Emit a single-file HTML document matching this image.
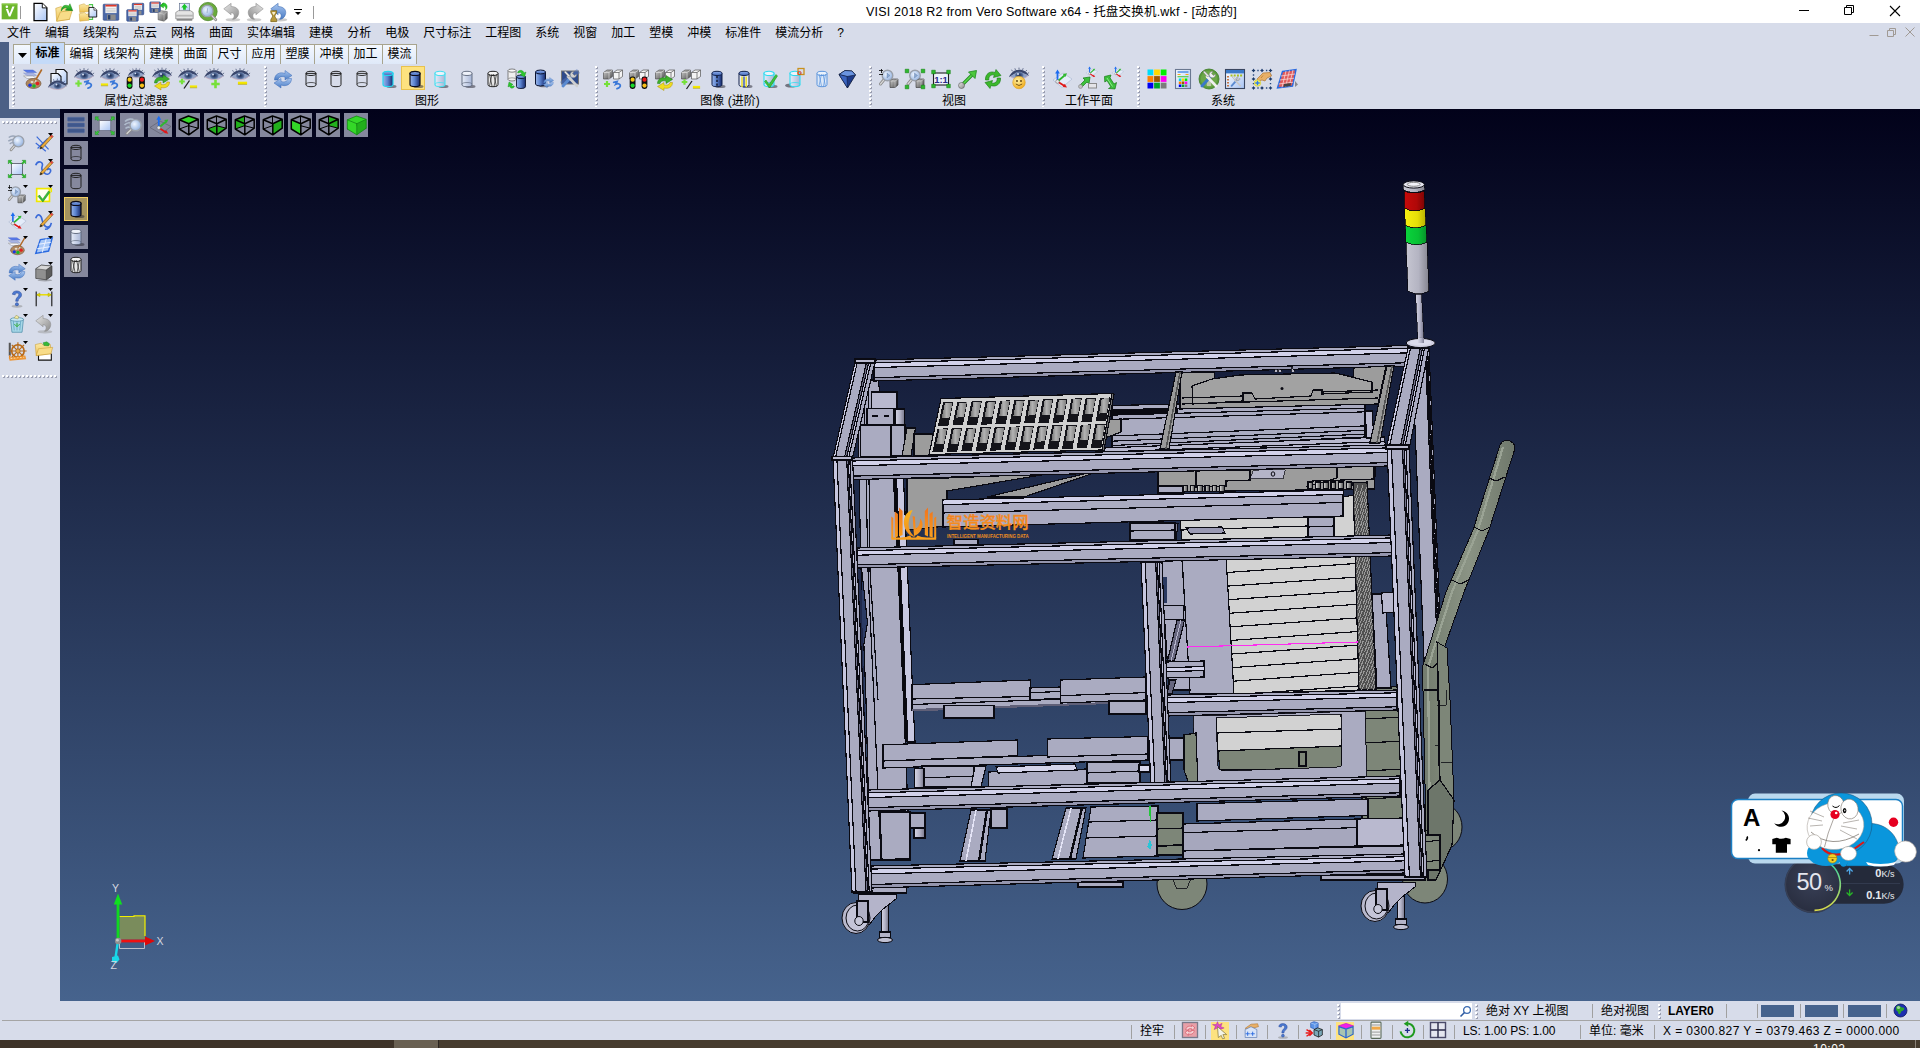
<!DOCTYPE html>
<html lang="zh-CN"><head><meta charset="utf-8"><title>VISI 2018 R2</title>
<style>
*{box-sizing:border-box;margin:0;padding:0}
html,body{width:1920px;height:1048px;overflow:hidden;background:#d7dcea;font-family:"Liberation Sans","Noto Sans CJK SC",sans-serif;font-size:12px;color:#000}
.ic{position:absolute;overflow:visible}
#title{position:absolute;left:0;top:0;width:1920px;height:23px;background:#fff}
#ttext{position:absolute;left:866px;top:4px;width:371px;height:17px;line-height:17px;font-size:12.5px;white-space:nowrap;letter-spacing:.2px;text-align:left}
.tsep{position:absolute;top:6px;width:1px;height:13px;background:#9a9a9a}
#menu{position:absolute;left:0;top:23px;width:1920px;height:20px;background:#d7dcea;white-space:nowrap;line-height:20px}
#menu span{display:inline-block;padding:0 7px;font-size:12px}
#bluestrip{position:absolute;left:0;top:42px;width:9px;height:76px;background:#4c6085}
#bluestrip2{position:absolute;left:0;top:109px;width:60px;height:9px;background:#4c6085}
#tabs{position:absolute;left:13px;top:42px;height:22px;white-space:nowrap;font-size:0}
.tab{display:inline-block;vertical-align:bottom;height:20px;width:34px;margin-top:2px;border:1px solid #a8a48e;border-bottom:none;border-left:none;background:linear-gradient(#f4f8fe,#dfe9f9);font-size:12px;line-height:18px;text-align:center}
.tab.w3{width:46px}
.tab.dd{width:18px;border-left:1px solid #a8a48e}
.tab.dd svg{margin-top:8px}
.tab.sel{height:22px;margin-top:0;width:35px;background:#c4daf8;font-weight:bold;border-left:1px solid #a8a48e;margin-left:-1px;line-height:20px}
#tools{position:absolute;left:9px;top:64px;width:1911px;height:45px;background:#d7dcea}
#tools .ic,#tools .grip,#tools .glabel,#tools .selbox{margin-left:-9px}
.grip{position:absolute;top:2px;width:3px;height:41px;background-image:radial-gradient(circle at 1px 1px,#fff 0.9px,transparent 1.1px),radial-gradient(circle at 2px 2px,#9a9eb0 0.9px,transparent 1.1px);background-size:3px 4px}
.glabel{position:absolute;top:30px;width:120px;text-align:center;font-size:12px;line-height:14px;white-space:nowrap}
.selbox{position:absolute;width:24px;height:24px;background:#fde27f;border:1px solid #e8c24e}
#left{position:absolute;left:0;top:118px;width:60px;height:883px;background:#d7dcea}
.hgrip{position:absolute;left:2px;width:56px;height:3px;background-image:radial-gradient(circle at 1px 1px,#fff 0.9px,transparent 1.1px),radial-gradient(circle at 2px 2px,#9a9eb0 0.9px,transparent 1.1px);background-size:4px 3px}
#view{position:absolute;left:60px;top:109px;width:1860px;height:892px;background:linear-gradient(#02021a,#46638d);overflow:hidden}
#model{position:absolute;left:0;top:0}
.vbtn{position:absolute;width:24px;height:24px;background:#85889d}
.vbtn.vsel{background:#a6945f;border:1px solid #f2cf63}
.vbtn .ic{margin:0}
#status{position:absolute;left:0;top:1001px;width:1920px;height:39px;background:#d7dcea;font-size:12px;white-space:nowrap}
#status .ln{position:absolute;left:2px;top:19px;width:1918px;height:1px;background:#a5a5a5}
#status .t{position:absolute;line-height:16px;height:16px}
#status .vs{position:absolute;width:1px;background:#a0a0a0}
#status .sw{position:absolute;top:4px;height:12px;width:33px;background:#46638d}
#taskbar{position:absolute;left:0;top:1040px;width:1920px;height:8px;background:#463c2e;overflow:hidden}
#taskbar div{position:absolute;top:0;height:8px}
.tb1{left:0;width:394px;background:#3e3328}.tb2{left:394px;width:44px;background:#696052}.tb3{left:438px;width:1px;background:#2a2420}.tb4{left:1915px;width:1px;background:#8a8278}
#taskbar .clock{left:1813px;top:3px;color:#fff;font-size:12px;line-height:12px;height:12px;letter-spacing:.5px}

</style></head><body>
<svg width="0" height="0" style="position:absolute"><defs><linearGradient id="gB" x1="0" y1="0" x2="1" y2="0"><stop offset="0" stop-color="#9ab6ea"/><stop offset=".45" stop-color="#5c84d0"/><stop offset="1" stop-color="#16286a"/></linearGradient><linearGradient id="gBt" x1="0" y1="0" x2="0" y2="1"><stop offset="0" stop-color="#8fb0ee"/><stop offset="1" stop-color="#4468b8"/></linearGradient><linearGradient id="gLB" x1="0" y1="0" x2="1" y2="0"><stop offset="0" stop-color="#e6ecf8"/><stop offset="1" stop-color="#a8b6d6"/></linearGradient><linearGradient id="gDoc" x1="0" y1="0" x2="1" y2="1"><stop offset="0" stop-color="#fff"/><stop offset="1" stop-color="#a8c4f4"/></linearGradient><linearGradient id="gFold" x1="0" y1="0" x2="0" y2="1"><stop offset="0" stop-color="#fbe9a6"/><stop offset="1" stop-color="#eec254"/></linearGradient><linearGradient id="gGrn" x1="0" y1="0" x2="0" y2="1"><stop offset="0" stop-color="#58d848"/><stop offset="1" stop-color="#0e8a1a"/></linearGradient><linearGradient id="gSil" x1="0" y1="0" x2="1" y2="1"><stop offset="0" stop-color="#e8e8e8"/><stop offset="1" stop-color="#8a8a8a"/></linearGradient><linearGradient id="gArr" x1="0" y1="0" x2="0" y2="1"><stop offset="0" stop-color="#a8c6f0"/><stop offset="1" stop-color="#4a7cc4"/></linearGradient><radialGradient id="gEye" cx=".5" cy=".5" r=".6"><stop offset="0" stop-color="#1c2a50"/><stop offset=".55" stop-color="#4a628f"/><stop offset="1" stop-color="#98aacc"/></radialGradient><radialGradient id="gSm" cx=".4" cy=".35" r=".7"><stop offset="0" stop-color="#fff2a0"/><stop offset="1" stop-color="#f0a818"/></radialGradient><radialGradient id="gLens" cx=".4" cy=".4" r=".7"><stop offset="0" stop-color="#f0f6ff"/><stop offset="1" stop-color="#88aadc"/></radialGradient><linearGradient id="gCube" x1="0" y1="0" x2="1" y2="1"><stop offset="0" stop-color="#d0d0d0"/><stop offset="1" stop-color="#505050"/></linearGradient></defs></svg>
<div id="title"><svg class="ic" style="left:0.3px;top:1.4px" width="20" height="20" viewBox="0 0 24 24"><rect x="2" y="3" width="19" height="19" fill="#6cb52d"/><rect x="2" y="3" width="19" height="2" fill="#8fd04a" opacity=".6"/><path d="M7,9.5 L10.5,18.5 H12.5 L17.5,6.5 H14.8 L11.6,15 L9.6,9.5z" fill="#fff"/><circle cx="8.2" cy="6.8" r="1.5" fill="#fff"/></svg><svg class="ic" style="left:29px;top:1px" width="22" height="22" viewBox="0 0 24 24"><path d="M5.5,2.5 H14.5 L19.5,7.5 V21.5 H5.5z" fill="url(#gDoc)" stroke="#000" stroke-width="1.4"/><path d="M14.5,2.5 V7.5 H19.5" fill="#fff" stroke="#000" stroke-width="1"/></svg><svg class="ic" style="left:53px;top:1px" width="22" height="22" viewBox="0 0 24 24"><path d="M3,8 L9,6 L11,8 L17,7 L18,20 L4,22z" fill="url(#gFold)" stroke="#c89a30" stroke-width=".6"/><path d="M4,22 L8,12 L21,10 L18,20z" fill="#f8dc88" stroke="#c89a30" stroke-width=".6"/><path d="M9,11 C9,5 14,3.5 17,5.5 L18.5,3 L21.5,10.5 L13.5,10 L15.3,7.8 C13,6.5 10.5,8 9,11z" fill="url(#gGrn)" stroke="#0e7a14" stroke-width=".5"/></svg><svg class="ic" style="left:77px;top:1px" width="22" height="22" viewBox="0 0 24 24"><path d="M2.5,4.5 L8,3 L10,5 L13,4.5 L13,11.5 L3,12.5z" fill="url(#gFold)" stroke="#c89a30" stroke-width=".5"/><path d="M2.5,14 L8,12.5 L10,14.5 L13,14 L13,21 L3,22z" fill="url(#gFold)" stroke="#c89a30" stroke-width=".5"/><path d="M13,4 H17 V7 M13,20 H17 V17" fill="none" stroke="#4cc84c" stroke-width="1.2"/><path d="M13,7 H18.5 L21.5,10 V17.5 H13z" fill="url(#gDoc)" stroke="#111" stroke-width="1"/><path d="M18.5,7 V10 H21.5" fill="#fff" stroke="#111" stroke-width=".7"/></svg><svg class="ic" style="left:100px;top:1px" width="22" height="22" viewBox="0 0 24 24"><rect x="3.5" y="3.5" width="17" height="17.5" rx=".8" fill="#4a68a8" stroke="#2c4480" stroke-width=".7"/><rect x="5.880000000000001" y="4.1" width="12.24" height="9.1" fill="#f2f2f2"/><rect x="5.880000000000001" y="4.1" width="12.24" height="1.925" fill="#e03a2a"/><path d="M6.9,8.4h10.2M6.9,10.15h10.2M6.9,11.725h10.2" stroke="#aaa" stroke-width=".5"/><rect x="7.58" y="14.700000000000001" width="9.520000000000001" height="5.95" fill="#8c8c8c"/><rect x="8.6" y="15.4" width="2.72" height="4.7250000000000005" fill="#28406e"/></svg><svg class="ic" style="left:124px;top:1px" width="22" height="22" viewBox="0 0 24 24"><rect x="9" y="2.5" width="12.5" height="12.5" rx=".8" fill="#4a68a8" stroke="#2c4480" stroke-width=".7"/><rect x="10.75" y="3.1" width="9.0" height="6.5" fill="#f2f2f2"/><rect x="10.75" y="3.1" width="9.0" height="1.375" fill="#e03a2a"/><path d="M11.5,6.0h7.5M11.5,7.25h7.5M11.5,8.375h7.5" stroke="#aaa" stroke-width=".5"/><rect x="12.0" y="10.5" width="7.000000000000001" height="4.25" fill="#8c8c8c"/><rect x="12.75" y="11.0" width="2.0" height="3.375" fill="#28406e"/><rect x="3" y="9.5" width="12.5" height="12.5" rx=".8" fill="#4a68a8" stroke="#2c4480" stroke-width=".7"/><rect x="4.75" y="10.1" width="9.0" height="6.5" fill="#f2f2f2"/><rect x="4.75" y="10.1" width="9.0" height="1.375" fill="#e03a2a"/><path d="M5.5,13.0h7.5M5.5,14.25h7.5M5.5,15.375h7.5" stroke="#aaa" stroke-width=".5"/><rect x="6.0" y="17.5" width="7.000000000000001" height="4.25" fill="#8c8c8c"/><rect x="6.75" y="18.0" width="2.0" height="3.375" fill="#28406e"/></svg><svg class="ic" style="left:148px;top:1px" width="22" height="22" viewBox="0 0 24 24"><rect x="2" y="1" width="11.5" height="11.5" rx=".8" fill="#4a68a8" stroke="#2c4480" stroke-width=".7"/><rect x="3.6100000000000003" y="1.6" width="8.28" height="5.98" fill="#f2f2f2"/><rect x="3.6100000000000003" y="1.6" width="8.28" height="1.265" fill="#e03a2a"/><path d="M4.300000000000001,4.220000000000001h6.8999999999999995M4.300000000000001,5.37h6.8999999999999995M4.300000000000001,6.404999999999999h6.8999999999999995" stroke="#aaa" stroke-width=".5"/><rect x="4.76" y="8.36" width="6.44" height="3.91" fill="#8c8c8c"/><rect x="5.449999999999999" y="8.82" width="1.84" height="3.1050000000000004" fill="#28406e"/><path d="M11,13 L14.5,10.5 L21,11.5 L21,19 L17.5,22 L11,20.5z" fill="url(#gCube)" stroke="#444" stroke-width=".5"/><path d="M11,13 L17.5,14.5 V22 M17.5,14.5 L21,11.5" fill="none" stroke="#ddd" stroke-width=".5"/><path d="M14.5,5 C15,1.5 19,1.5 20.5,4.5 C21.5,6.5 20.5,9 19,9.8 C20,7.5 19,5.5 17,5.5 L17,7.5 L13,5.2 L17,2z" fill="#2cc82c" stroke="#0e8a14" stroke-width=".4"/></svg><svg class="ic" style="left:173px;top:1px" width="22" height="22" viewBox="0 0 24 24"><rect x="7" y="2.5" width="11" height="10" fill="url(#gDoc)" stroke="#5a6a8a" stroke-width=".7"/><path d="M12.5,3 L16,7 H14 V9.5 H11 V7 H9z" fill="#18c428"/><path d="M3,12.5 L6,10.5 H19 L22,12.5 V19.5 H3z" fill="#e4e4e4" stroke="#777" stroke-width=".7"/><rect x="3" y="15" width="19" height="2" fill="#b8b8b8"/><rect x="4" y="19.5" width="17" height="2" fill="#888"/></svg><svg class="ic" style="left:197px;top:1px" width="22" height="22" viewBox="0 0 24 24"><circle cx="12" cy="11.5" r="10" fill="#6aaa3c" stroke="#4a8426" stroke-width=".8"/><path d="M15.385,15.165000000000001 L20.5,20.5" stroke="#8c8c8c" stroke-width="3" stroke-linecap="round"/><path d="M15.385,15.165000000000001 L20.5,20.5" stroke="#d8d8d8" stroke-width="1.2" stroke-linecap="round"/><circle cx="11.2" cy="10.8" r="6.3" fill="url(#gLens)" stroke="#9aa0aa" stroke-width="1.4"/><path d="M11.5,8 L11,13" stroke="#88a0c0" stroke-width=".8"/></svg><svg class="ic" style="left:221px;top:1px" width="22" height="22" viewBox="0 0 24 24"><g><ellipse cx="13" cy="20.5" rx="8" ry="1.8" fill="#9a9a9a" opacity=".5"/><path d="M3,8.5 L11,2.5 L11,6 C18,6 21,11 18.5,16 C17.5,18.5 15,20 12.5,20 C15,17.5 15.5,13.5 11,12.5 L11,15z" fill="url(#gSil)" stroke="#8a8a8a" stroke-width=".6"/></g></svg><svg class="ic" style="left:244px;top:1px" width="22" height="22" viewBox="0 0 24 24"><g transform="translate(24,0) scale(-1,1)"><ellipse cx="13" cy="20.5" rx="8" ry="1.8" fill="#9a9a9a" opacity=".5"/><path d="M3,8.5 L11,2.5 L11,6 C18,6 21,11 18.5,16 C17.5,18.5 15,20 12.5,20 C15,17.5 15.5,13.5 11,12.5 L11,15z" fill="url(#gSil)" stroke="#8a8a8a" stroke-width=".6"/></g></svg><svg class="ic" style="left:268px;top:1px" width="22" height="22" viewBox="0 0 24 24"><g><ellipse cx="13" cy="20.5" rx="8" ry="1.8" fill="#9a9a9a" opacity=".5"/><path d="M3,8.5 L11,2.5 L11,6 C18,6 21,11 18.5,16 C17.5,18.5 15,20 12.5,20 C15,17.5 15.5,13.5 11,12.5 L11,15z" fill="url(#gArr)" stroke="#3a68b0" stroke-width=".6"/></g><path d="M3,10.5 H9.5 V12 C9.5,14 7.5,15 7.5,16.5 C7.5,18 9.5,19 9.5,21 V22.5 H3 V21 C3,19 5,18 5,16.5 C5,15 3,14 3,12z" fill="#b89a3a" stroke="#6a5410" stroke-width=".7"/><path d="M4.5,12 H8 C8,13.5 6.8,14.5 6.3,15.5 C5.6,14.5 4.5,13.5 4.5,12z" fill="#f4ecd0"/></svg><div class="tsep" style="left:20px"></div><div class="tsep" style="left:313px"></div><svg class="ic" style="left:292px;top:6px" width="12" height="12" viewBox="0 0 12 12"><rect x="2" y="3" width="8" height="1" fill="#000"/><path d="M3 6h6l-3 3z" fill="#000"/></svg><div id="ttext">VISI 2018 R2 from Vero Software x64 - 托盘交换机.wkf - [动态的]</div><svg class="ic" style="left:1798px;top:5px" width="12" height="12" viewBox="0 0 12 12"><path d="M1 5.5h10" stroke="#000" stroke-width="1"/></svg><svg class="ic" style="left:1843px;top:3px" width="12" height="13" viewBox="0 0 12 13"><path d="M1.5 4.5h7v7h-7z M3.5 4.5v-2h7v7h-2" fill="none" stroke="#000" stroke-width="1"/></svg><svg class="ic" style="left:1889px;top:5px" width="12" height="12" viewBox="0 0 12 12"><path d="M1 1l10 10M11 1L1 11" stroke="#000" stroke-width="1.1"/></svg></div><div id="menu"><span>文件</span><span>编辑</span><span>线架构</span><span>点云</span><span>网格</span><span>曲面</span><span>实体编辑</span><span>建模</span><span>分析</span><span>电极</span><span>尺寸标注</span><span>工程图</span><span>系统</span><span>视窗</span><span>加工</span><span>塑模</span><span>冲模</span><span>标准件</span><span>模流分析</span><span>?</span><svg class="ic" style="left:1869px;top:4px" width="10" height="10" viewBox="0 0 10 10"><path d="M0.5 8.5h9" stroke="#a09a94" stroke-width="1"/></svg><svg class="ic" style="left:1887px;top:4px" width="10" height="10" viewBox="0 0 10 10"><path d="M0.5 3.5h6v6h-6z M2.5 3.5v-2h6v6h-2" fill="none" stroke="#a09a94" stroke-width="1"/></svg><svg class="ic" style="left:1905px;top:4px" width="10" height="10" viewBox="0 0 10 10"><path d="M0.5 0.5l9 9M9.5 0.5l-9 9" stroke="#a09a94" stroke-width="1"/></svg></div>
<div id="bluestrip"></div><div id="bluestrip2"></div><div id="tabs"><div class="tab dd"><svg width="9" height="5" viewBox="0 0 9 5"><path d="M0 0h9L4.5 5z" fill="#000"/></svg></div><div class="tab sel">标准</div><div class="tab">编辑</div><div class="tab w3">线架构</div><div class="tab">建模</div><div class="tab">曲面</div><div class="tab">尺寸</div><div class="tab">应用</div><div class="tab">塑膜</div><div class="tab">冲模</div><div class="tab">加工</div><div class="tab">模流</div></div>
<div id="tools"><div class="grip" style="left:12px"></div><svg class="ic" style="left:21px;top:3px" width="24" height="24" viewBox="0 0 24 24"><path d="M2.5,3 H12 L15.5,5.5 H6z" fill="#5a7ae8" stroke="#3a5ac8" stroke-width=".4"/><path d="M2.5,6 H12 L15.5,8.5 H6z" fill="#a8b4e4" stroke="#7a88c0" stroke-width=".4"/><path d="M2.5,9 H12 L15.5,11.5 H6z" fill="#f4f4f8" stroke="#888" stroke-width=".5"/><ellipse cx="12.5" cy="16.5" rx="7.5" ry="5" fill="#b08860" stroke="#6a4a2a" stroke-width=".6"/><circle cx="9" cy="18.3" r="1.8" fill="#1838e0"/><circle cx="13" cy="19" r="1.8" fill="#18b828"/><circle cx="16.5" cy="16.5" r="1.8" fill="#e02020"/><ellipse cx="11" cy="15" rx="1.5" ry="1" fill="#e8e0d0"/><path d="M20.5,3 L14,14" stroke="#b06a28" stroke-width="1.6" stroke-linecap="round"/><path d="M14.6,12.6 L13,16 L16,14z" fill="#d8d8d8"/></svg><svg class="ic" style="left:46px;top:3px" width="24" height="24" viewBox="0 0 24 24"><path d="M10,2.5 H18 L21,5.5 V17 H10z" fill="url(#gDoc)" stroke="#111" stroke-width="1.1"/><path d="M5,6.5 H12 L15,9.5 V19 H5z" fill="url(#gDoc)" stroke="#111" stroke-width="1.1"/><g transform="translate(0,10.5) scale(0.95)"><path d="M2,10.8 C4,5.5 8,3.2 12.5,3.2 C17,3.2 20.5,5.5 22,9.5 C18.5,7.4 15.5,6.8 12.5,6.8 C8.5,6.8 5,8.4 2,10.8z" fill="#39466c"/><path d="M5.5,4.8l-1,-1.6M8.5,3.6l-.6,-1.8M12,3l0,-1.9M15.5,3.4l.7,-1.7M18.6,5l1.2,-1.5M20.6,7l1.5,-1" stroke="#39466c" stroke-width=".7"/><path d="M3.2,10 C6.5,7 9.5,6.2 12.5,6.2 C15.5,6.2 18.5,7 21.2,9 C18.5,11.4 15.5,12.3 12.5,12.3 C9,12.3 6,11.5 3.2,10z" fill="#90a2c6"/><ellipse cx="12.3" cy="8.7" rx="4.4" ry="3.5" fill="url(#gEye)"/><circle cx="11" cy="7.4" r="1" fill="#d4def2"/><path d="M3.2,10 C6,11.8 9,12.7 12.5,12.7 C15.5,12.7 18.5,11.7 21.2,9" fill="none" stroke="#c09aac" stroke-width=".6"/></g></svg><svg class="ic" style="left:72px;top:3px" width="24" height="24" viewBox="0 0 24 24"><g transform="translate(0,0) scale(1)"><path d="M2,10.8 C4,5.5 8,3.2 12.5,3.2 C17,3.2 20.5,5.5 22,9.5 C18.5,7.4 15.5,6.8 12.5,6.8 C8.5,6.8 5,8.4 2,10.8z" fill="#39466c"/><path d="M5.5,4.8l-1,-1.6M8.5,3.6l-.6,-1.8M12,3l0,-1.9M15.5,3.4l.7,-1.7M18.6,5l1.2,-1.5M20.6,7l1.5,-1" stroke="#39466c" stroke-width=".7"/><path d="M3.2,10 C6.5,7 9.5,6.2 12.5,6.2 C15.5,6.2 18.5,7 21.2,9 C18.5,11.4 15.5,12.3 12.5,12.3 C9,12.3 6,11.5 3.2,10z" fill="#90a2c6"/><ellipse cx="12.3" cy="8.7" rx="4.4" ry="3.5" fill="url(#gEye)"/><circle cx="11" cy="7.4" r="1" fill="#d4def2"/><path d="M3.2,10 C6,11.8 9,12.7 12.5,12.7 C15.5,12.7 18.5,11.7 21.2,9" fill="none" stroke="#c09aac" stroke-width=".6"/></g><path d="M3.3,16.5H9.7M6.5,13.3V19.7" stroke="#76e03a" stroke-width="2.2"/><path d="M12.7,14.8 L16.0,14 L14.7,16.8 C19.5,14.5 21.5,19.5 16.0,21.2" fill="none" stroke="#3a78d8" stroke-width="1.8" stroke-linecap="round"/></svg><svg class="ic" style="left:98.2px;top:3px" width="24" height="24" viewBox="0 0 24 24"><g transform="translate(0,0) scale(1)"><path d="M2,10.8 C4,5.5 8,3.2 12.5,3.2 C17,3.2 20.5,5.5 22,9.5 C18.5,7.4 15.5,6.8 12.5,6.8 C8.5,6.8 5,8.4 2,10.8z" fill="#39466c"/><path d="M5.5,4.8l-1,-1.6M8.5,3.6l-.6,-1.8M12,3l0,-1.9M15.5,3.4l.7,-1.7M18.6,5l1.2,-1.5M20.6,7l1.5,-1" stroke="#39466c" stroke-width=".7"/><path d="M3.2,10 C6.5,7 9.5,6.2 12.5,6.2 C15.5,6.2 18.5,7 21.2,9 C18.5,11.4 15.5,12.3 12.5,12.3 C9,12.3 6,11.5 3.2,10z" fill="#90a2c6"/><ellipse cx="12.3" cy="8.7" rx="4.4" ry="3.5" fill="url(#gEye)"/><circle cx="11" cy="7.4" r="1" fill="#d4def2"/><path d="M3.2,10 C6,11.8 9,12.7 12.5,12.7 C15.5,12.7 18.5,11.7 21.2,9" fill="none" stroke="#c09aac" stroke-width=".6"/></g><path d="M2.9,17.5H10.1" stroke="#f4e800" stroke-width="2.2"/><path d="M2.9,18.8H10.1" stroke="#a89800" stroke-width=".6"/><path d="M12.7,14.8 L16.0,14 L14.7,16.8 C19.5,14.5 21.5,19.5 16.0,21.2" fill="none" stroke="#3a78d8" stroke-width="1.8" stroke-linecap="round"/></svg><svg class="ic" style="left:124.1px;top:3px" width="24" height="24" viewBox="0 0 24 24"><g transform="translate(2,0) scale(0.85)"><path d="M2,10.8 C4,5.5 8,3.2 12.5,3.2 C17,3.2 20.5,5.5 22,9.5 C18.5,7.4 15.5,6.8 12.5,6.8 C8.5,6.8 5,8.4 2,10.8z" fill="#39466c"/><path d="M5.5,4.8l-1,-1.6M8.5,3.6l-.6,-1.8M12,3l0,-1.9M15.5,3.4l.7,-1.7M18.6,5l1.2,-1.5M20.6,7l1.5,-1" stroke="#39466c" stroke-width=".7"/><path d="M3.2,10 C6.5,7 9.5,6.2 12.5,6.2 C15.5,6.2 18.5,7 21.2,9 C18.5,11.4 15.5,12.3 12.5,12.3 C9,12.3 6,11.5 3.2,10z" fill="#90a2c6"/><ellipse cx="12.3" cy="8.7" rx="4.4" ry="3.5" fill="url(#gEye)"/><circle cx="11" cy="7.4" r="1" fill="#d4def2"/><path d="M3.2,10 C6,11.8 9,12.7 12.5,12.7 C15.5,12.7 18.5,11.7 21.2,9" fill="none" stroke="#c09aac" stroke-width=".6"/></g><rect x="2.6999999999999997" y="9.5" width="5.8" height="12.4" rx="2.4" fill="#101010"/><circle cx="5.6" cy="12.7" r="2.1" fill="#f8c818"/><circle cx="5.6" cy="18.6" r="2.1" fill="#18d828"/><rect x="15.1" y="9.5" width="5.8" height="12.4" rx="2.4" fill="#101010"/><circle cx="18" cy="12.7" r="2.1" fill="#f01818"/><circle cx="18" cy="18.6" r="2.1" fill="#f8c018"/></svg><svg class="ic" style="left:149.8px;top:3px" width="24" height="24" viewBox="0 0 24 24"><g transform="translate(0,-0.5) scale(1)"><path d="M2,10.8 C4,5.5 8,3.2 12.5,3.2 C17,3.2 20.5,5.5 22,9.5 C18.5,7.4 15.5,6.8 12.5,6.8 C8.5,6.8 5,8.4 2,10.8z" fill="#39466c"/><path d="M5.5,4.8l-1,-1.6M8.5,3.6l-.6,-1.8M12,3l0,-1.9M15.5,3.4l.7,-1.7M18.6,5l1.2,-1.5M20.6,7l1.5,-1" stroke="#39466c" stroke-width=".7"/><path d="M3.2,10 C6.5,7 9.5,6.2 12.5,6.2 C15.5,6.2 18.5,7 21.2,9 C18.5,11.4 15.5,12.3 12.5,12.3 C9,12.3 6,11.5 3.2,10z" fill="#90a2c6"/><ellipse cx="12.3" cy="8.7" rx="4.4" ry="3.5" fill="url(#gEye)"/><circle cx="11" cy="7.4" r="1" fill="#d4def2"/><path d="M3.2,10 C6,11.8 9,12.7 12.5,12.7 C15.5,12.7 18.5,11.7 21.2,9" fill="none" stroke="#c09aac" stroke-width=".6"/></g><g transform="translate(0,1.5)"><path d="M4.5,14.5 C4.5,9.5 9,8 13,9 L13,6.5 L19.5,10.5 L13,14.5 L13,12 C10,11.5 7.5,12 7,14.5z" fill="#3fb02c" stroke="#1d7a14" stroke-width=".5"/><path d="M19.5,13.5 C19.5,18.5 15,20 11,19 L11,21.5 L4.5,17.5 L11,13.5 L11,16 C14,16.5 16.5,16 17,13.5z" fill="#f0dc20" stroke="#a89008" stroke-width=".5"/></g></svg><svg class="ic" style="left:176.2px;top:3px" width="24" height="24" viewBox="0 0 24 24"><g transform="translate(0,0) scale(1)"><path d="M2,10.8 C4,5.5 8,3.2 12.5,3.2 C17,3.2 20.5,5.5 22,9.5 C18.5,7.4 15.5,6.8 12.5,6.8 C8.5,6.8 5,8.4 2,10.8z" fill="#39466c"/><path d="M5.5,4.8l-1,-1.6M8.5,3.6l-.6,-1.8M12,3l0,-1.9M15.5,3.4l.7,-1.7M18.6,5l1.2,-1.5M20.6,7l1.5,-1" stroke="#39466c" stroke-width=".7"/><path d="M3.2,10 C6.5,7 9.5,6.2 12.5,6.2 C15.5,6.2 18.5,7 21.2,9 C18.5,11.4 15.5,12.3 12.5,12.3 C9,12.3 6,11.5 3.2,10z" fill="#90a2c6"/><ellipse cx="12.3" cy="8.7" rx="4.4" ry="3.5" fill="url(#gEye)"/><circle cx="11" cy="7.4" r="1" fill="#d4def2"/><path d="M3.2,10 C6,11.8 9,12.7 12.5,12.7 C15.5,12.7 18.5,11.7 21.2,9" fill="none" stroke="#c09aac" stroke-width=".6"/></g><path d="M3.2,14.5H8.8M6,11.7V17.3" stroke="#76e03a" stroke-width="2.2"/><path d="M8,21.5 L13.5,13.5" stroke="#222" stroke-width="1.3"/><path d="M13.9,19.5H21.1" stroke="#f4e800" stroke-width="2.2"/><path d="M13.9,20.8H21.1" stroke="#a89800" stroke-width=".6"/></svg><svg class="ic" style="left:202.4px;top:3px" width="24" height="24" viewBox="0 0 24 24"><g transform="translate(0,0) scale(1)"><path d="M2,10.8 C4,5.5 8,3.2 12.5,3.2 C17,3.2 20.5,5.5 22,9.5 C18.5,7.4 15.5,6.8 12.5,6.8 C8.5,6.8 5,8.4 2,10.8z" fill="#39466c"/><path d="M5.5,4.8l-1,-1.6M8.5,3.6l-.6,-1.8M12,3l0,-1.9M15.5,3.4l.7,-1.7M18.6,5l1.2,-1.5M20.6,7l1.5,-1" stroke="#39466c" stroke-width=".7"/><path d="M3.2,10 C6.5,7 9.5,6.2 12.5,6.2 C15.5,6.2 18.5,7 21.2,9 C18.5,11.4 15.5,12.3 12.5,12.3 C9,12.3 6,11.5 3.2,10z" fill="#90a2c6"/><ellipse cx="12.3" cy="8.7" rx="4.4" ry="3.5" fill="url(#gEye)"/><circle cx="11" cy="7.4" r="1" fill="#d4def2"/><path d="M3.2,10 C6,11.8 9,12.7 12.5,12.7 C15.5,12.7 18.5,11.7 21.2,9" fill="none" stroke="#c09aac" stroke-width=".6"/></g><path d="M9.3,17H17.7M13.5,12.8V21.2" stroke="#76e03a" stroke-width="2.6"/></svg><svg class="ic" style="left:228px;top:3px" width="24" height="24" viewBox="0 0 24 24"><g transform="translate(0,0) scale(1)"><path d="M2,10.8 C4,5.5 8,3.2 12.5,3.2 C17,3.2 20.5,5.5 22,9.5 C18.5,7.4 15.5,6.8 12.5,6.8 C8.5,6.8 5,8.4 2,10.8z" fill="#39466c"/><path d="M5.5,4.8l-1,-1.6M8.5,3.6l-.6,-1.8M12,3l0,-1.9M15.5,3.4l.7,-1.7M18.6,5l1.2,-1.5M20.6,7l1.5,-1" stroke="#39466c" stroke-width=".7"/><path d="M3.2,10 C6.5,7 9.5,6.2 12.5,6.2 C15.5,6.2 18.5,7 21.2,9 C18.5,11.4 15.5,12.3 12.5,12.3 C9,12.3 6,11.5 3.2,10z" fill="#90a2c6"/><ellipse cx="12.3" cy="8.7" rx="4.4" ry="3.5" fill="url(#gEye)"/><circle cx="11" cy="7.4" r="1" fill="#d4def2"/><path d="M3.2,10 C6,11.8 9,12.7 12.5,12.7 C15.5,12.7 18.5,11.7 21.2,9" fill="none" stroke="#c09aac" stroke-width=".6"/></g><path d="M9.9,16H19.1" stroke="#f4e800" stroke-width="2.6"/><path d="M9.9,17.3H19.1" stroke="#a89800" stroke-width=".6"/></svg><div class="glabel" style="left:76px">属性/过滤器</div><div class="grip" style="left:264px"></div><svg class="ic" style="left:271px;top:3px" width="24" height="24" viewBox="0 0 24 24"><path d="M3.5,13 C3.5,7 9,4.5 14,6.5 L14,3.5 L21,8.5 L14,13 L14,10 C10.5,9 7.5,10 7,13z" fill="url(#gArr)" stroke="#3a6ab8" stroke-width=".5"/><path d="M20.5,11.5 C20.5,17.5 15,20 10,18 L10,21 L3,16 L10,11.5 L10,14.5 C13.5,15.5 16.5,14.5 17,11.5z" fill="url(#gArr)" stroke="#3a6ab8" stroke-width=".5"/></svg><svg class="ic" style="left:298.5px;top:3px" width="24" height="24" viewBox="0 0 24 24"><path d="M7,6.4 V17.599999999999998 A5.0,2.1 0 0 0 17,17.599999999999998 V6.4z" fill="none" stroke="#222" stroke-width="1"/><ellipse cx="12.0" cy="6.4" rx="5.0" ry="2.1" fill="none" stroke="#222" stroke-width="1"/><path d="M7,17.599999999999998 A5.0,2.1 0 0 1 17,17.599999999999998" fill="none" stroke="#222" stroke-width="0.7"/></svg><svg class="ic" style="left:324.2px;top:3px" width="24" height="24" viewBox="0 0 24 24"><path d="M7,6.4 V17.599999999999998 A5.0,2.1 0 0 0 17,17.599999999999998 V6.4z" fill="none" stroke="#222" stroke-width="1"/><ellipse cx="12.0" cy="6.4" rx="5.0" ry="2.1" fill="none" stroke="#222" stroke-width="1"/></svg><svg class="ic" style="left:350.1px;top:3px" width="24" height="24" viewBox="0 0 24 24"><path d="M7,6.4 V17.599999999999998 A5.0,2.1 0 0 0 17,17.599999999999998 V6.4z" fill="none" stroke="#333" stroke-width="1"/><ellipse cx="12.0" cy="6.4" rx="5.0" ry="2.1" fill="none" stroke="#333" stroke-width="1"/><path d="M7,17.599999999999998 A5.0,2.1 0 0 1 17,17.599999999999998" fill="none" stroke="#333" stroke-width="0.7"/></svg><svg class="ic" style="left:376.3px;top:3px" width="24" height="24" viewBox="0 0 24 24"><ellipse cx="15.5" cy="19.4" rx="5.0" ry="1.6" fill="#30303a" opacity=".55"/><path d="M7,6.4 V17.599999999999998 A5.0,2.1 0 0 0 17,17.599999999999998 V6.4z" fill="url(#gB)" stroke="#20d8f0" stroke-width="1.2"/><ellipse cx="12.0" cy="6.4" rx="5.0" ry="2.1" fill="url(#gBt)" stroke="#20d8f0" stroke-width="1.2"/></svg><div class="selbox" style="left:400.6px;top:2px"></div><svg class="ic" style="left:402.6px;top:3px" width="24" height="24" viewBox="0 0 24 24"><ellipse cx="15.5" cy="19.4" rx="5.0" ry="1.6" fill="#30303a" opacity=".55"/><path d="M7,6.4 V17.599999999999998 A5.0,2.1 0 0 0 17,17.599999999999998 V6.4z" fill="url(#gB)" stroke="#0c0c18" stroke-width="1.2"/><ellipse cx="12.0" cy="6.4" rx="5.0" ry="2.1" fill="url(#gBt)" stroke="#0c0c18" stroke-width="1.2"/></svg><svg class="ic" style="left:428.4px;top:3px" width="24" height="24" viewBox="0 0 24 24"><ellipse cx="15.5" cy="19.4" rx="5.0" ry="1.6" fill="#30303a" opacity=".55"/><path d="M7,6.4 V17.599999999999998 A5.0,2.1 0 0 0 17,17.599999999999998 V6.4z" fill="url(#gLB)" stroke="#48e0f0" stroke-width="1.1"/><ellipse cx="12.0" cy="6.4" rx="5.0" ry="2.1" fill="#eef2fa" stroke="#48e0f0" stroke-width="1.1"/><path d="M7,17.599999999999998 A5.0,2.1 0 0 1 17,17.599999999999998" fill="none" stroke="#48e0f0" stroke-width="0.77"/></svg><svg class="ic" style="left:454.5px;top:3px" width="24" height="24" viewBox="0 0 24 24"><ellipse cx="15.5" cy="19.4" rx="5.0" ry="1.6" fill="#30303a" opacity=".55"/><path d="M7,6.4 V17.599999999999998 A5.0,2.1 0 0 0 17,17.599999999999998 V6.4z" fill="url(#gLB)" stroke="#5a6478" stroke-width="0.9"/><ellipse cx="12.0" cy="6.4" rx="5.0" ry="2.1" fill="#eef2fa" stroke="#5a6478" stroke-width="0.9"/><path d="M7,17.599999999999998 A5.0,2.1 0 0 1 17,17.599999999999998" fill="none" stroke="#5a6478" stroke-width="0.63"/></svg><svg class="ic" style="left:480.5px;top:3px" width="24" height="24" viewBox="0 0 24 24"><path d="M7,6.4 V17.599999999999998 A5.0,2.1 0 0 0 17,17.599999999999998 V6.4z" fill="#e8e8e8" stroke="#222" stroke-width="1"/><ellipse cx="12.0" cy="6.4" rx="5.0" ry="2.1" fill="#f4f4f4" stroke="#222" stroke-width="1"/><path d="M8.5,7 L11,19 M11,7 L8.5,19 M12.5,7 L15.5,19.5 M15.5,7 L13,19.5" stroke="#222" stroke-width=".7" fill="none"/></svg><svg class="ic" style="left:505px;top:3px" width="24" height="24" viewBox="0 0 24 24"><path d="M3,3.6 V12.4 A4.0,1.6 0 0 0 11,12.4 V3.6z" fill="#f0f0f0" stroke="#666" stroke-width="0.8"/><ellipse cx="7.0" cy="3.6" rx="4.0" ry="1.6" fill="#fafafa" stroke="#666" stroke-width="0.8"/><path d="M3,12.4 A4.0,1.6 0 0 1 11,12.4" fill="none" stroke="#666" stroke-width="0.5599999999999999"/><path d="M11.5,9.8 V19.7 A4.5,1.8 0 0 0 20.5,19.7 V9.8z" fill="url(#gB)" stroke="#0c1430" stroke-width="0.9"/><ellipse cx="16.0" cy="9.8" rx="4.5" ry="1.8" fill="url(#gBt)" stroke="#0c1430" stroke-width="0.9"/><path d="M12.5,5.5 C14,2.5 18,2.5 19,6 L21,5 L19.5,10 L15,7.5 L17,7 C16,5 14.5,5 14,6z" fill="#2cc82c" stroke="#0e8a14" stroke-width=".4"/><path d="M9.5,19.5 C8,22 5,21.5 4.5,19 L3,20 L4,15 L8,17.5 L6.3,18.2 C7,19.5 8,19.5 8.5,18.8z" fill="#2cc82c" stroke="#0e8a14" stroke-width=".4"/></svg><svg class="ic" style="left:532.3px;top:3px" width="24" height="24" viewBox="0 0 24 24"><ellipse cx="12.0" cy="18.7" rx="5.0" ry="1.6" fill="#30303a" opacity=".55"/><path d="M3.5,5 V17 A5.0,2 0 0 0 13.5,17 V5z" fill="url(#gB)" stroke="#0c1430" stroke-width="1"/><ellipse cx="8.5" cy="5" rx="5.0" ry="2" fill="url(#gBt)" stroke="#0c1430" stroke-width="1"/><g transform="translate(9.5,8.5) scale(.58)"><path d="M3.5,13 C3.5,7 9,4.5 14,6.5 L14,3.5 L21,8.5 L14,13 L14,10 C10.5,9 7.5,10 7,13z" fill="url(#gArr)" stroke="#3a6ab8" stroke-width=".5"/><path d="M20.5,11.5 C20.5,17.5 15,20 10,18 L10,21 L3,16 L10,11.5 L10,14.5 C13.5,15.5 16.5,14.5 17,11.5z" fill="url(#gArr)" stroke="#3a6ab8" stroke-width=".5"/></g></svg><svg class="ic" style="left:557.7px;top:3px" width="24" height="24" viewBox="0 0 24 24"><rect x="3.5" y="4" width="17" height="13" fill="#2e4a8a" stroke="#777" stroke-width="1"/><path d="M3.5,17 L20.5,4" stroke="#5a78b8" stroke-width="5" opacity=".5"/><path d="M5,19 L14,9" stroke="#5a8ad0" stroke-width="3" stroke-linecap="round"/><path d="M13,10 C11,7 13,4 16,4.5 L14.5,6.5 L16.5,8.5 L18.5,7 C19,10 16,12 13,10z" fill="#d0d0d0" stroke="#777" stroke-width=".5"/><path d="M19,19 L10,9.5" stroke="#d0d0d0" stroke-width="2.6" stroke-linecap="round"/><path d="M10.5,10 L6,5 L7.5,4 L12,8.5z" fill="#e8e8e8" stroke="#777" stroke-width=".5"/></svg><div class="glabel" style="left:367px">图形</div><div class="grip" style="left:595px"></div><svg class="ic" style="left:600.6px;top:3px" width="24" height="24" viewBox="0 0 24 24"><g transform="translate(0,0)"><path d="M2.5,5.5 L6,3 L11.5,3 L11.5,9.5 L8,12 L2.5,12z" fill="url(#gCube)" stroke="#444" stroke-width=".6"/><path d="M2.5,5.5 H8 V12 M8,5.5 L11.5,3" fill="none" stroke="#eee" stroke-width=".6"/><path d="M12.5,5.5 L16,3 L21.5,3 L21.5,9.5 L18,12 L12.5,12z" fill="#f4f4f4" stroke="#555" stroke-width=".7"/><path d="M12.5,5.5 H18 V12 M18,5.5 L21.5,3" fill="none" stroke="#555" stroke-width=".7"/></g><path d="M3,17H9M6,14V20" stroke="#76e03a" stroke-width="2.2"/><path d="M12.7,15.3 L16.0,14.5 L14.7,17.3 C19.5,15.0 21.5,20.0 16.0,21.7" fill="none" stroke="#3a78d8" stroke-width="1.8" stroke-linecap="round"/></svg><svg class="ic" style="left:626.6px;top:3px" width="24" height="24" viewBox="0 0 24 24"><g transform="translate(0,0)"><path d="M2.5,5.5 L6,3 L11.5,3 L11.5,9.5 L8,12 L2.5,12z" fill="url(#gCube)" stroke="#444" stroke-width=".6"/><path d="M2.5,5.5 H8 V12 M8,5.5 L11.5,3" fill="none" stroke="#eee" stroke-width=".6"/><path d="M12.5,5.5 L16,3 L21.5,3 L21.5,9.5 L18,12 L12.5,12z" fill="#f4f4f4" stroke="#555" stroke-width=".7"/><path d="M12.5,5.5 H18 V12 M18,5.5 L21.5,3" fill="none" stroke="#555" stroke-width=".7"/></g><rect x="2.6999999999999997" y="9.5" width="5.8" height="12.4" rx="2.4" fill="#101010"/><circle cx="5.6" cy="12.7" r="2.1" fill="#f8c818"/><circle cx="5.6" cy="18.6" r="2.1" fill="#18d828"/><rect x="14.6" y="9.5" width="5.8" height="12.4" rx="2.4" fill="#101010"/><circle cx="17.5" cy="12.7" r="2.1" fill="#f01818"/><circle cx="17.5" cy="18.6" r="2.1" fill="#f8c018"/></svg><svg class="ic" style="left:652.5px;top:3px" width="24" height="24" viewBox="0 0 24 24"><g transform="translate(0,0)"><path d="M2.5,5.5 L6,3 L11.5,3 L11.5,9.5 L8,12 L2.5,12z" fill="url(#gCube)" stroke="#444" stroke-width=".6"/><path d="M2.5,5.5 H8 V12 M8,5.5 L11.5,3" fill="none" stroke="#eee" stroke-width=".6"/><path d="M12.5,5.5 L16,3 L21.5,3 L21.5,9.5 L18,12 L12.5,12z" fill="#f4f4f4" stroke="#555" stroke-width=".7"/><path d="M12.5,5.5 H18 V12 M18,5.5 L21.5,3" fill="none" stroke="#555" stroke-width=".7"/></g><g transform="translate(0,2)"><path d="M4.5,14.5 C4.5,9.5 9,8 13,9 L13,6.5 L19.5,10.5 L13,14.5 L13,12 C10,11.5 7.5,12 7,14.5z" fill="#3fb02c" stroke="#1d7a14" stroke-width=".5"/><path d="M19.5,13.5 C19.5,18.5 15,20 11,19 L11,21.5 L4.5,17.5 L11,13.5 L11,16 C14,16.5 16.5,16 17,13.5z" fill="#f0dc20" stroke="#a89008" stroke-width=".5"/></g></svg><svg class="ic" style="left:678.6px;top:3px" width="24" height="24" viewBox="0 0 24 24"><g transform="translate(0,0)"><path d="M2.5,5.5 L6,3 L11.5,3 L11.5,9.5 L8,12 L2.5,12z" fill="url(#gCube)" stroke="#444" stroke-width=".6"/><path d="M2.5,5.5 H8 V12 M8,5.5 L11.5,3" fill="none" stroke="#eee" stroke-width=".6"/><path d="M12.5,5.5 L16,3 L21.5,3 L21.5,9.5 L18,12 L12.5,12z" fill="#f4f4f4" stroke="#555" stroke-width=".7"/><path d="M12.5,5.5 H18 V12 M18,5.5 L21.5,3" fill="none" stroke="#555" stroke-width=".7"/></g><path d="M2.7,15H8.3M5.5,12.2V17.8" stroke="#76e03a" stroke-width="2.2"/><path d="M7.5,22 L13,14" stroke="#222" stroke-width="1.3"/><path d="M13.9,20H21.1" stroke="#f4e800" stroke-width="2.2"/><path d="M13.9,21.3H21.1" stroke="#a89800" stroke-width=".6"/></svg><svg class="ic" style="left:705.4px;top:3px" width="24" height="24" viewBox="0 0 24 24"><ellipse cx="15.5" cy="19.4" rx="5.0" ry="1.6" fill="#30303a" opacity=".55"/><path d="M7,6.4 V17.599999999999998 A5.0,2.1 0 0 0 17,17.599999999999998 V6.4z" fill="url(#gB)" stroke="#10204a" stroke-width="1"/><ellipse cx="12.0" cy="6.4" rx="5.0" ry="2.1" fill="url(#gBt)" stroke="#10204a" stroke-width="1"/><path d="M12,9 V19.5" stroke="#0a0a18" stroke-width="1.3" stroke-dasharray="2.2 1.6"/></svg><svg class="ic" style="left:731.8px;top:3px" width="24" height="24" viewBox="0 0 24 24"><ellipse cx="15.5" cy="19.4" rx="5.0" ry="1.6" fill="#30303a" opacity=".55"/><path d="M7,6.4 V17.599999999999998 A5.0,2.1 0 0 0 17,17.599999999999998 V6.4z" fill="#e8eaf4" stroke="#10204a" stroke-width="1"/><ellipse cx="12.0" cy="6.4" rx="5.0" ry="2.1" fill="url(#gBt)" stroke="#10204a" stroke-width="1"/><path d="M10,9.5 V20 M14.2,9.5 V20" stroke="#e8dc30" stroke-width="1.6"/><path d="M12,9.5 V20.5" stroke="#3a58a8" stroke-width="1.4"/></svg><svg class="ic" style="left:758px;top:3px" width="24" height="24" viewBox="0 0 24 24"><ellipse cx="14.5" cy="19.4" rx="5.0" ry="1.6" fill="#30303a" opacity=".55"/><path d="M6,6.4 V17.599999999999998 A5.0,2.1 0 0 0 16,17.599999999999998 V6.4z" fill="url(#gLB)" stroke="#30dcf0" stroke-width="1.1"/><ellipse cx="11.0" cy="6.4" rx="5.0" ry="2.1" fill="#eef2fa" stroke="#30dcf0" stroke-width="1.1"/><path d="M6,17.599999999999998 A5.0,2.1 0 0 1 16,17.599999999999998" fill="none" stroke="#30dcf0" stroke-width="0.77"/><path d="M8,13 L11,17.5 L18,7.5 L19.5,9 L11.5,21 L6.5,14.5z" fill="#3cc43c" stroke="#148a14" stroke-width=".5"/></svg><svg class="ic" style="left:783.6px;top:3px" width="24" height="24" viewBox="0 0 24 24"><ellipse cx="7" cy="18.5" rx="6" ry="2" fill="#30303a" opacity=".6"/><path d="M6,6.4 V17.599999999999998 A5.0,2.1 0 0 0 16,17.599999999999998 V6.4z" fill="url(#gLB)" stroke="#30dcf0" stroke-width="1.1"/><ellipse cx="11.0" cy="6.4" rx="5.0" ry="2.1" fill="#eef2fa" stroke="#30dcf0" stroke-width="1.1"/><path d="M6,17.599999999999998 A5.0,2.1 0 0 1 16,17.599999999999998" fill="none" stroke="#30dcf0" stroke-width="0.77"/><rect x="14" y="1.5" width="6" height="6" fill="none" stroke="#c8901c" stroke-width="1.3"/><circle cx="15.5" cy="6" r="1.6" fill="none" stroke="#e03a2a" stroke-width="1"/></svg><svg class="ic" style="left:809.5px;top:3px" width="24" height="24" viewBox="0 0 24 24"><path d="M7,6.4 V17.599999999999998 A5.0,2.1 0 0 0 17,17.599999999999998 V6.4z" fill="#dce8f8" stroke="#5a94dc" stroke-width="1"/><ellipse cx="12.0" cy="6.4" rx="5.0" ry="2.1" fill="#eaf2fc" stroke="#5a94dc" stroke-width="1"/><path d="M9,7 L11.5,19 M11.5,7 L9,19 M13,7 L15.5,19.5 M15.5,7 L13.5,19.5" stroke="#5a94dc" stroke-width=".7" fill="none"/></svg><svg class="ic" style="left:835px;top:3px" width="24" height="24" viewBox="0 0 24 24"><path d="M4,7.5 L10,3.5 L17,4 L20.5,8 L12.5,21z" fill="#1c3a8a" stroke="#0a1430" stroke-width=".8"/><path d="M4,7.5 L10,3.5 L17,4 L20.5,8 L12,9.5z" fill="#6a94e0" stroke="#0a1430" stroke-width=".6"/><path d="M12,9.5 L12.5,21 L4,7.5z" fill="#3a64c0" stroke="#0a1430" stroke-width=".5"/></svg><div class="glabel" style="left:670px">图像 (进阶)</div><div class="grip" style="left:869px"></div><svg class="ic" style="left:877px;top:3px" width="24" height="24" viewBox="0 0 24 24"><path d="M7.35,12.325 L3.5,17" stroke="#8c8c8c" stroke-width="3" stroke-linecap="round"/><path d="M7.35,12.325 L3.5,17" stroke="#d8d8d8" stroke-width="1.2" stroke-linecap="round"/><circle cx="10.5" cy="8.5" r="5.3" fill="url(#gLens)" stroke="#9aa0aa" stroke-width="1.4"/><path d="M10,6 V11 L13,8.5z" fill="#8aa8d0" stroke="#5a78a8" stroke-width=".4"/><path d="M13,14 L16,12 L21,12 L21,18 L18,20.5 L13,20.5z" fill="url(#gCube)" stroke="#333" stroke-width=".6"/><path d="M13,14 H18 V20.5 M18,14 L21,12" fill="none" stroke="#ddd" stroke-width=".5"/><path d="M2,3.5h4M4,1.5v4M2,7.5h4" stroke="#000" stroke-width=".8" shape-rendering="crispEdges"/></svg><svg class="ic" style="left:903px;top:3px" width="24" height="24" viewBox="0 0 24 24"><path d="M8.85,12.325 L5,17" stroke="#8c8c8c" stroke-width="3" stroke-linecap="round"/><path d="M8.85,12.325 L5,17" stroke="#d8d8d8" stroke-width="1.2" stroke-linecap="round"/><circle cx="12" cy="8.5" r="5.3" fill="url(#gLens)" stroke="#9aa0aa" stroke-width="1.4"/><path d="M11.5,6 V11 L14.5,8.5z" fill="#8aa8d0" stroke="#5a78a8" stroke-width=".4"/><path d="M13,14 L16,12 L21,12 L21,18 L18,20.5 L13,20.5z" fill="url(#gCube)" stroke="#333" stroke-width=".6"/><path d="M13,14 H18 V20.5 M18,14 L21,12" fill="none" stroke="#ddd" stroke-width=".5"/><path d="M2.2,2.2h3.6v3.6h-3.6z" fill="#2eb82e" stroke="#0e7a0e" stroke-width=".5"/><path d="M18.2,2.2h3.6v3.6h-3.6z" fill="#2eb82e" stroke="#0e7a0e" stroke-width=".5"/><path d="M2.2,18.2h3.6v3.6h-3.6z" fill="#2eb82e" stroke="#0e7a0e" stroke-width=".5"/><path d="M18.2,18.2h3.6v3.6h-3.6z" fill="#2eb82e" stroke="#0e7a0e" stroke-width=".5"/></svg><svg class="ic" style="left:929px;top:3px" width="24" height="24" viewBox="0 0 24 24"><rect x="4.5" y="6" width="15" height="12" fill="#eef2fa" stroke="#222" stroke-width="1.1"/><text x="12" y="15.8" font-family="Liberation Sans,sans-serif" font-size="9.5" font-weight="bold" text-anchor="middle" fill="#2a2a8a">1:1</text><path d="M2.7,3.2h3.6v3.6h-3.6z" fill="#2eb82e" stroke="#0e7a0e" stroke-width=".5"/><path d="M17.7,3.2h3.6v3.6h-3.6z" fill="#2eb82e" stroke="#0e7a0e" stroke-width=".5"/><path d="M2.7,17.2h3.6v3.6h-3.6z" fill="#2eb82e" stroke="#0e7a0e" stroke-width=".5"/><path d="M17.7,17.2h3.6v3.6h-3.6z" fill="#2eb82e" stroke="#0e7a0e" stroke-width=".5"/></svg><svg class="ic" style="left:955.5px;top:3px" width="24" height="24" viewBox="0 0 24 24"><path d="M5.5,18.5 L16,8" stroke="#1e8a1e" stroke-width="3.2"/><path d="M5.5,18.5 L16,8" stroke="#5cd84c" stroke-width="1.6"/><path d="M20.5,3.5 L19,11.5 L12.5,5z" fill="#4cc83c" stroke="#1e8a1e" stroke-width=".8"/><circle cx="5.5" cy="18.5" r="3" fill="url(#gSil)" stroke="#555" stroke-width=".6"/></svg><svg class="ic" style="left:981px;top:3px" width="24" height="24" viewBox="0 0 24 24"><path d="M4.5,13 C4,7 9,3.5 14,5.5 L15,2.5 L20,8.5 L12.5,10.5 L13.3,8 C10,7 7.5,9.5 7.8,13z" fill="#3cb82c" stroke="#167a10" stroke-width=".6"/><path d="M19.5,11 C20,17 15,20.5 10,18.5 L9,21.5 L4,15.5 L11.5,13.5 L10.7,16 C14,17 16.5,14.5 16.2,11z" fill="#3cb82c" stroke="#167a10" stroke-width=".6"/></svg><svg class="ic" style="left:1007px;top:3px" width="24" height="24" viewBox="0 0 24 24"><g transform="translate(0,-0.5) scale(1)"><path d="M2,10.8 C4,5.5 8,3.2 12.5,3.2 C17,3.2 20.5,5.5 22,9.5 C18.5,7.4 15.5,6.8 12.5,6.8 C8.5,6.8 5,8.4 2,10.8z" fill="#39466c"/><path d="M5.5,4.8l-1,-1.6M8.5,3.6l-.6,-1.8M12,3l0,-1.9M15.5,3.4l.7,-1.7M18.6,5l1.2,-1.5M20.6,7l1.5,-1" stroke="#39466c" stroke-width=".7"/><path d="M3.2,10 C6.5,7 9.5,6.2 12.5,6.2 C15.5,6.2 18.5,7 21.2,9 C18.5,11.4 15.5,12.3 12.5,12.3 C9,12.3 6,11.5 3.2,10z" fill="#90a2c6"/><ellipse cx="12.3" cy="8.7" rx="4.4" ry="3.5" fill="url(#gEye)"/><circle cx="11" cy="7.4" r="1" fill="#d4def2"/><path d="M3.2,10 C6,11.8 9,12.7 12.5,12.7 C15.5,12.7 18.5,11.7 21.2,9" fill="none" stroke="#c09aac" stroke-width=".6"/></g><circle cx="12" cy="15.5" r="6.3" fill="url(#gSm)" stroke="#d89a18" stroke-width=".5"/><circle cx="10" cy="14" r=".9" fill="#5a3a08"/><circle cx="14" cy="14" r=".9" fill="#5a3a08"/><path d="M8.8,17 Q12,20 15.2,17" fill="none" stroke="#5a3a08" stroke-width=".8"/></svg><div class="glabel" style="left:894px">视图</div><div class="grip" style="left:1042px"></div><svg class="ic" style="left:1050.3px;top:3px" width="24" height="24" viewBox="0 0 24 24"><path d="M3,13 L13,6 L22,12 L12,20.5z" fill="#e4ecfa" stroke="#a8b4cc" stroke-width=".6"/><path d="M7.5,14.5 V5.5" stroke="#1c6cf0" stroke-width="1.8"/><path d="M5.1,6.5 L7.5,2.5 L9.9,6.5z" fill="#1c6cf0"/><path d="M7.5,14.5 L14.5,8.5" stroke="#2eb82e" stroke-width="1.8"/><path d="M17.0,6.300000000000001 l-4.2,0.6 l2.6,3z" fill="#2eb82e"/><path d="M7.5,14.5 L14.5,19.0" stroke="#e01818" stroke-width="1.8"/><path d="M17.0,20.5 l-2.2,-3.8 l-2,3.2z" fill="#e01818"/><circle cx="7.5" cy="14.5" r="1.8" fill="#e8e8e8" stroke="#666" stroke-width=".5"/></svg><svg class="ic" style="left:1076.3px;top:3px" width="24" height="24" viewBox="0 0 24 24"><g transform="translate(8,-1.5) scale(.62)"><path d="M3,12 L14,5.5 L22,10 L12,17.5z" fill="#e4ecfa" stroke="#a8b4cc" stroke-width=".6"/><path d="M9,13 V4.450000000000001" stroke="#1c6cf0" stroke-width="1.71"/><path d="M6.720000000000001,5.4 L9,1.6000000000000014 L11.28,5.4z" fill="#1c6cf0"/><path d="M9,13 L15.649999999999999,7.300000000000001" stroke="#2eb82e" stroke-width="1.71"/><path d="M18.025,5.210000000000001 l-3.9899999999999998,0.57 l2.4699999999999998,2.8499999999999996z" fill="#2eb82e"/><path d="M9,13 L15.649999999999999,17.275" stroke="#e01818" stroke-width="1.71"/><path d="M18.025,18.7 l-2.09,-3.61 l-1.9,3.04z" fill="#e01818"/><circle cx="9" cy="13" r="1.71" fill="#e8e8e8" stroke="#666" stroke-width=".5"/></g><path d="M3,19 L9,13 L7,11 L14,10 L13,17 L11,15 L5.5,20.5z" fill="#3cc03c" stroke="#157a15" stroke-width=".7"/><rect x="12.5" y="16.5" width="8" height="4.5" fill="#e4e4e8" stroke="#8a8a8a" stroke-width="1"/><circle cx="4.5" cy="19.5" r="2" fill="#c0c0c0" stroke="#777" stroke-width=".5"/></svg><svg class="ic" style="left:1102.4px;top:3px" width="24" height="24" viewBox="0 0 24 24"><g transform="translate(8,-1.5) scale(.62)"><path d="M3,12 L14,5.5 L22,10 L12,17.5z" fill="#e4ecfa" stroke="#a8b4cc" stroke-width=".6"/><path d="M9,13 V4.450000000000001" stroke="#1c6cf0" stroke-width="1.71"/><path d="M6.720000000000001,5.4 L9,1.6000000000000014 L11.28,5.4z" fill="#1c6cf0"/><path d="M9,13 L15.649999999999999,7.300000000000001" stroke="#2eb82e" stroke-width="1.71"/><path d="M18.025,5.210000000000001 l-3.9899999999999998,0.57 l2.4699999999999998,2.8499999999999996z" fill="#2eb82e"/><path d="M9,13 L15.649999999999999,17.275" stroke="#e01818" stroke-width="1.71"/><path d="M18.025,18.7 l-2.09,-3.61 l-1.9,3.04z" fill="#e01818"/><circle cx="9" cy="13" r="1.71" fill="#e8e8e8" stroke="#666" stroke-width=".5"/></g><path d="M2.5,9.5 L9,8 L8,10.8 L12,17 L14.5,15.5 L13,22 L6.5,21.5 L9,20 L5,13.5 L2.8,15z" fill="#3cc03c" stroke="#157a15" stroke-width=".7"/><path d="M5,11 L10.5,19.5" stroke="#8ae88a" stroke-width="1"/></svg><div class="glabel" style="left:1029px">工作平面</div><div class="grip" style="left:1137px"></div><svg class="ic" style="left:1145px;top:3px" width="24" height="24" viewBox="0 0 24 24"><rect x="2.5" y="2.5" width="5.8" height="5.8" fill="#00dcf8"/><rect x="9.1" y="2.5" width="5.8" height="5.8" fill="#ffd800"/><rect x="15.7" y="2.5" width="5.8" height="5.8" fill="#00f000"/><rect x="2.5" y="9.1" width="5.8" height="5.8" fill="#ff8000"/><rect x="9.1" y="9.1" width="5.8" height="5.8" fill="#a05800"/><rect x="15.7" y="9.1" width="5.8" height="5.8" fill="#ff00f0"/><rect x="2.5" y="15.7" width="5.8" height="5.8" fill="#0000f0"/><rect x="9.1" y="15.7" width="5.8" height="5.8" fill="#00a82c"/><rect x="15.7" y="15.7" width="5.8" height="5.8" fill="#7c7c7c"/></svg><svg class="ic" style="left:1171px;top:3px" width="24" height="24" viewBox="0 0 24 24"><rect x="4.5" y="2.5" width="15" height="19" fill="url(#gDoc)" stroke="#6a7890" stroke-width="1.1"/><rect x="6.5" y="4.2" width="11" height="1.6" fill="#5a94e8"/><path d="M6.5,7.5h3M14.5,7.5h3" stroke="#f8a820" stroke-width="1.1"/><rect x="6.5" y="9" width="11" height="1.3" fill="#68d058"/><rect x="7.8" y="11.5" width="2.5" height="2.5" fill="#00dcf8"/><rect x="10.8" y="11.5" width="2.5" height="2.5" fill="#ffd800"/><rect x="13.8" y="11.5" width="2.5" height="2.5" fill="#00f000"/><rect x="7.8" y="14.5" width="2.5" height="2.5" fill="#ff8000"/><rect x="10.8" y="14.5" width="2.5" height="2.5" fill="#a05800"/><rect x="13.8" y="14.5" width="2.5" height="2.5" fill="#ff00f0"/><rect x="7.8" y="17.5" width="2.5" height="2.5" fill="#0000f0"/><rect x="10.8" y="17.5" width="2.5" height="2.5" fill="#00a82c"/><rect x="13.8" y="17.5" width="2.5" height="2.5" fill="#7c7c7c"/></svg><svg class="ic" style="left:1197.3px;top:3px" width="24" height="24" viewBox="0 0 24 24"><circle cx="12" cy="12" r="10" fill="#5a9a3a" stroke="#3a7a22" stroke-width=".8"/><circle cx="12" cy="12" r="8.2" fill="#78b054" opacity=".6"/><path d="M10,19 C9,16 11,14 12,11 C13,14 15,16 14,19z" fill="#d0d0c0" opacity=".8"/><path d="M5,19 L14,9" stroke="#3a78c8" stroke-width="3" stroke-linecap="round"/><path d="M13,10 C11,7 13,4 16,4.5 L14.5,6.5 L16.5,8.5 L18.5,7 C19,10 16,12 13,10z" fill="#f0f0f0" stroke="#777" stroke-width=".5"/><path d="M19,19 L10,9.5" stroke="#f0f0f0" stroke-width="2.6" stroke-linecap="round"/><path d="M10.5,10 L6,5 L7.5,4 L12,8.5z" fill="#e8e8e8" stroke="#777" stroke-width=".5"/></svg><svg class="ic" style="left:1223px;top:3px" width="24" height="24" viewBox="0 0 24 24"><rect x="2.5" y="2.5" width="19" height="19" fill="url(#gDoc)" stroke="#3a4660" stroke-width="1.1"/><rect x="3" y="3" width="18" height="3.4" fill="#3a78c8"/><path d="M7.5,8.5h2M10.7,8.5h2M13.9,8.5h2M17.1,8.5h2" stroke="#a8c020" stroke-width="1.8"/><path d="M5,9v1.6M5,12v1.6M5,15v1.6M5,18v1.6" stroke="#c05a18" stroke-width="1.6"/><g transform="translate(5.5,7) scale(.62)"><path d="M5,19 L14,9" stroke="#5a8ad0" stroke-width="3" stroke-linecap="round"/><path d="M13,10 C11,7 13,4 16,4.5 L14.5,6.5 L16.5,8.5 L18.5,7 C19,10 16,12 13,10z" fill="#c8c8c8" stroke="#777" stroke-width=".5"/><path d="M19,19 L10,9.5" stroke="#c8c8c8" stroke-width="2.6" stroke-linecap="round"/><path d="M10.5,10 L6,5 L7.5,4 L12,8.5z" fill="#e8e8e8" stroke="#777" stroke-width=".5"/></g></svg><svg class="ic" style="left:1249.5px;top:3px" width="24" height="24" viewBox="0 0 24 24"><path d="M3,3.5h18M3,21h18M3.5,3v18M20.5,3v18" stroke="#2a4a80" stroke-width="1.4" stroke-dasharray="1.4 2.9" fill="none"/><path d="M3.5,1.5L4.7,3.5L3.5,5.5L2.3,3.5z M1.5,3.5L3.5,2.3L5.5,3.5L3.5,4.7z" fill="#1c3a6a"/><path d="M12,1.5L13.2,3.5L12,5.5L10.8,3.5z M10,3.5L12,2.3L14,3.5L12,4.7z" fill="#1c3a6a"/><path d="M20.5,1.5L21.7,3.5L20.5,5.5L19.3,3.5z M18.5,3.5L20.5,2.3L22.5,3.5L20.5,4.7z" fill="#1c3a6a"/><path d="M3.5,10L4.7,12L3.5,14L2.3,12z M1.5,12L3.5,10.8L5.5,12L3.5,13.2z" fill="#1c3a6a"/><path d="M20.5,10L21.7,12L20.5,14L19.3,12z M18.5,12L20.5,10.8L22.5,12L20.5,13.2z" fill="#1c3a6a"/><path d="M3.5,19L4.7,21L3.5,23L2.3,21z M1.5,21L3.5,19.8L5.5,21L3.5,22.2z" fill="#1c3a6a"/><path d="M12,19L13.2,21L12,23L10.8,21z M10,21L12,19.8L14,21L12,22.2z" fill="#1c3a6a"/><path d="M20.5,19L21.7,21L20.5,23L19.3,21z M18.5,21L20.5,19.8L22.5,21L20.5,22.2z" fill="#1c3a6a"/><path d="M7,12 L13,6 L20,5.5 L21.5,9 L17,11 L15,14 L12,13 L8.5,14z" fill="#e8b068" stroke="#a86a20" stroke-width=".6"/><path d="M13,8.5 L11,11" stroke="#a86a20" stroke-width=".6"/><circle cx="7.5" cy="16" r="3.3" fill="#f4f060" stroke="#c8c020" stroke-width=".5"/><path d="M5.3,16h4.4M7.5,13.8v4.4" stroke="#2a7af0" stroke-width="1.3"/></svg><svg class="ic" style="left:1275px;top:3px" width="24" height="24" viewBox="0 0 24 24"><path d="M20,20 L23,17.5 L20,14z" fill="#555" opacity=".6"/><path d="M7.5,4.5 L21,2.5 L17.5,19 L2.5,21z" fill="#e05a5a" stroke="#2a6ae0" stroke-width="1.4"/><path d="M6,9 L20,7 M4.8,13 L19,11.2 M3.6,17 L18.2,15.2 M11,4 L7,20.5 M14.5,3.5 L10.5,20 M18,3 L14,19.5" stroke="#f4c8c8" stroke-width=".9" fill="none"/><path d="M9,17 L16,16 L15.5,19 L8.5,20z" fill="#444"/></svg><div class="glabel" style="left:1163px">系统</div></div>
<div id="left"><div class="hgrip" style="top:3px"></div><div class="hgrip" style="top:257px"></div><svg class="ic" style="left:6px;top:14px" width="22" height="22" viewBox="0 0 24 24"><path d="M3,6 C6,3.5 10,4 12,6 M2.5,10 C6,7.5 9,8 11,9.5" fill="none" stroke="#98a4b8" stroke-width="1.6"/><path d="M9.9,14.385 L5.5,19.5" stroke="#8c8c8c" stroke-width="3" stroke-linecap="round"/><path d="M9.9,14.385 L5.5,19.5" stroke="#d8d8d8" stroke-width="1.2" stroke-linecap="round"/><circle cx="13.5" cy="10.2" r="6" fill="url(#gLens)" stroke="#9aa0aa" stroke-width="1.4"/><path d="M4,13 C6,11.5 8,11.5 9,12" fill="none" stroke="#98a4b8" stroke-width="1.4"/></svg><svg class="ic" style="left:33px;top:14px" width="22" height="22" viewBox="0 0 24 24"><path d="M4,5 L17,19 M3,12 L14,21 M5,18 L16,7" stroke="#3a6ad8" stroke-width="1.3" fill="none"/><path d="M20,3 L22,5 L10.5,17.5 L7.5,18.5 L8.5,15.5z" fill="#e8a838" stroke="#6a4a10" stroke-width=".6"/><path d="M20,3 L22,5 L20.5,6.6 L18.5,4.6z" fill="#e04848"/><path d="M8.5,15.5 L10.5,17.5 L7.5,18.5z" fill="#222"/></svg><svg class="ic" style="left:47.5px;top:15px" width="5" height="3" viewBox="0 0 5 3"><path d="M0 0h5L2.5 3z" fill="#000"/></svg><svg class="ic" style="left:6px;top:40px" width="22" height="22" viewBox="0 0 24 24"><rect x="6" y="6" width="12" height="12" fill="url(#gDoc)" stroke="#445" stroke-width=".8"/><path d="M2.5,2.5 l4,0 l-1.3,1.3 l1.8,1.8 l-1.2,1.2 l-1.8,-1.8 l-1.5,1.5z" fill="#30c030" stroke="#0e7a0e" stroke-width=".4"/><path d="M21.5,2.5 l-4,0 l1.3,1.3 l-1.8,1.8 l1.2,1.2 l1.8,-1.8 l1.5,1.5z" fill="#30c030" stroke="#0e7a0e" stroke-width=".4"/><path d="M2.5,21.5 l4,0 l-1.3,-1.3 l1.8,-1.8 l-1.2,-1.2 l-1.8,1.8 l-1.5,-1.5z" fill="#30c030" stroke="#0e7a0e" stroke-width=".4"/><path d="M21.5,21.5 l-4,0 l1.3,-1.3 l-1.8,-1.8 l1.2,-1.2 l1.8,1.8 l1.5,-1.5z" fill="#30c030" stroke="#0e7a0e" stroke-width=".4"/></svg><svg class="ic" style="left:33px;top:40px" width="22" height="22" viewBox="0 0 24 24"><path d="M3,8 C5,2 12,4 10,9 C8,14 16,22 19,15 C20,12 17,11 15,13" stroke="#3a6ad8" stroke-width="1.8" fill="none"/><path d="M20,3 L22,5 L10.5,17.5 L7.5,18.5 L8.5,15.5z" fill="#e8a838" stroke="#6a4a10" stroke-width=".6"/><path d="M20,3 L22,5 L20.5,6.6 L18.5,4.6z" fill="#e04848"/><path d="M8.5,15.5 L10.5,17.5 L7.5,18.5z" fill="#222"/></svg><svg class="ic" style="left:47.5px;top:41px" width="5" height="3" viewBox="0 0 5 3"><path d="M0 0h5L2.5 3z" fill="#000"/></svg><svg class="ic" style="left:6px;top:66px" width="22" height="22" viewBox="0 0 24 24"><path d="M7.35,12.325 L3.5,17" stroke="#8c8c8c" stroke-width="3" stroke-linecap="round"/><path d="M7.35,12.325 L3.5,17" stroke="#d8d8d8" stroke-width="1.2" stroke-linecap="round"/><circle cx="10.5" cy="8.5" r="5.3" fill="url(#gLens)" stroke="#9aa0aa" stroke-width="1.4"/><path d="M10,6 V11 L13,8.5z" fill="#8aa8d0" stroke="#5a78a8" stroke-width=".4"/><path d="M13,14 L16,12 L21,12 L21,18 L18,20.5 L13,20.5z" fill="url(#gCube)" stroke="#333" stroke-width=".6"/><path d="M13,14 H18 V20.5 M18,14 L21,12" fill="none" stroke="#ddd" stroke-width=".5"/><path d="M2,3.5h4M4,1.5v4M2,7.5h4" stroke="#000" stroke-width=".8" shape-rendering="crispEdges"/></svg><svg class="ic" style="left:33px;top:66px" width="22" height="22" viewBox="0 0 24 24"><rect x="4" y="5" width="14" height="14" fill="#fffef0" stroke="#f0e800" stroke-width="1.8"/><path d="M16,5 H20 V9" fill="none" stroke="#f0e800" stroke-width="1.6"/><path d="M7,12 L10.5,16.5 L17,7.5 L18.5,9 L10.8,19.5 L5.5,13.5z" fill="#38c038" stroke="#127a12" stroke-width=".5"/></svg><svg class="ic" style="left:22.5px;top:67px" width="5" height="3" viewBox="0 0 5 3"><path d="M0 0h5L2.5 3z" fill="#000"/></svg><svg class="ic" style="left:47.5px;top:67px" width="5" height="3" viewBox="0 0 5 3"><path d="M0 0h5L2.5 3z" fill="#000"/></svg><svg class="ic" style="left:6px;top:92px" width="22" height="22" viewBox="0 0 24 24"><path d="M3,13 L13,6 L22,12 L12,20.5z" fill="#e4ecfa" stroke="#a8b4cc" stroke-width=".6"/><path d="M7.5,14.5 V5.5" stroke="#1c6cf0" stroke-width="1.8"/><path d="M5.1,6.5 L7.5,2.5 L9.9,6.5z" fill="#1c6cf0"/><path d="M7.5,14.5 L14.5,8.5" stroke="#2eb82e" stroke-width="1.8"/><path d="M17.0,6.300000000000001 l-4.2,0.6 l2.6,3z" fill="#2eb82e"/><path d="M7.5,14.5 L14.5,19.0" stroke="#e01818" stroke-width="1.8"/><path d="M17.0,20.5 l-2.2,-3.8 l-2,3.2z" fill="#e01818"/><circle cx="7.5" cy="14.5" r="1.8" fill="#e8e8e8" stroke="#666" stroke-width=".5"/></svg><svg class="ic" style="left:33px;top:92px" width="22" height="22" viewBox="0 0 24 24"><path d="M3,9 C5,3 9,5 10,11 C11,17 15,21 19,17 M13,21 C16,21 19,19 20,14" stroke="#3a6ad8" stroke-width="1.8" fill="none"/><path d="M20,3 L22,5 L10.5,17.5 L7.5,18.5 L8.5,15.5z" fill="#e8a838" stroke="#6a4a10" stroke-width=".6"/><path d="M20,3 L22,5 L20.5,6.6 L18.5,4.6z" fill="#e04848"/><path d="M8.5,15.5 L10.5,17.5 L7.5,18.5z" fill="#222"/></svg><svg class="ic" style="left:22.5px;top:93px" width="5" height="3" viewBox="0 0 5 3"><path d="M0 0h5L2.5 3z" fill="#000"/></svg><svg class="ic" style="left:47.5px;top:93px" width="5" height="3" viewBox="0 0 5 3"><path d="M0 0h5L2.5 3z" fill="#000"/></svg><svg class="ic" style="left:6px;top:117px" width="22" height="22" viewBox="0 0 24 24"><path d="M2.5,3 H12 L15.5,5.5 H6z" fill="#5a7ae8" stroke="#3a5ac8" stroke-width=".4"/><path d="M2.5,6 H12 L15.5,8.5 H6z" fill="#a8b4e4" stroke="#7a88c0" stroke-width=".4"/><path d="M2.5,9 H12 L15.5,11.5 H6z" fill="#f4f4f8" stroke="#888" stroke-width=".5"/><ellipse cx="12.5" cy="16.5" rx="7.5" ry="5" fill="#b08860" stroke="#6a4a2a" stroke-width=".6"/><circle cx="9" cy="18.3" r="1.8" fill="#1838e0"/><circle cx="13" cy="19" r="1.8" fill="#18b828"/><circle cx="16.5" cy="16.5" r="1.8" fill="#e02020"/><ellipse cx="11" cy="15" rx="1.5" ry="1" fill="#e8e0d0"/><path d="M20.5,3 L14,14" stroke="#b06a28" stroke-width="1.6" stroke-linecap="round"/><path d="M14.6,12.6 L13,16 L16,14z" fill="#d8d8d8"/></svg><svg class="ic" style="left:33px;top:117px" width="22" height="22" viewBox="0 0 24 24"><path d="M8,5 L21,3 L17,17.5 L3,20z" fill="#a8c8f8" stroke="#2a6ae0" stroke-width="1.5"/><path d="M6.3,10 L19.5,8 M4.6,15 L18.3,12.8 M14.5,4 L10,19" stroke="#e8f0ff" stroke-width="1.1"/></svg><svg class="ic" style="left:22.5px;top:118px" width="5" height="3" viewBox="0 0 5 3"><path d="M0 0h5L2.5 3z" fill="#000"/></svg><svg class="ic" style="left:47.5px;top:118px" width="5" height="3" viewBox="0 0 5 3"><path d="M0 0h5L2.5 3z" fill="#000"/></svg><svg class="ic" style="left:6px;top:143px" width="22" height="22" viewBox="0 0 24 24"><path d="M3.5,13 C3.5,7 9,4.5 14,6.5 L14,3.5 L21,8.5 L14,13 L14,10 C10.5,9 7.5,10 7,13z" fill="url(#gArr)" stroke="#3a6ab8" stroke-width=".5"/><path d="M20.5,11.5 C20.5,17.5 15,20 10,18 L10,21 L3,16 L10,11.5 L10,14.5 C13.5,15.5 16.5,14.5 17,11.5z" fill="url(#gArr)" stroke="#3a6ab8" stroke-width=".5"/></svg><svg class="ic" style="left:33px;top:143px" width="22" height="22" viewBox="0 0 24 24"><path d="M3,8.5 L9,4.5 L20.5,5.5 L20.5,16 L14.5,20.5 L3,19z" fill="#909090" stroke="#333" stroke-width=".7"/><path d="M3,8.5 L14.5,9.8 L20.5,5.5 L9,4.5z" fill="#d8d8d8" stroke="#333" stroke-width=".5"/><path d="M14.5,9.8 V20.5 L20.5,16 V5.5z" fill="#5c5c5c" stroke="#333" stroke-width=".5"/><ellipse cx="13" cy="21" rx="8" ry="1.3" fill="#555" opacity=".4"/></svg><svg class="ic" style="left:22.5px;top:144px" width="5" height="3" viewBox="0 0 5 3"><path d="M0 0h5L2.5 3z" fill="#000"/></svg><svg class="ic" style="left:47.5px;top:144px" width="5" height="3" viewBox="0 0 5 3"><path d="M0 0h5L2.5 3z" fill="#000"/></svg><svg class="ic" style="left:6px;top:169px" width="22" height="22" viewBox="0 0 24 24"><ellipse cx="12" cy="21" rx="6" ry="1.5" fill="#888" opacity=".5"/><path d="M7,8 C7,3 17,3 17,8.5 C17,12 13.2,12 13.2,15.5 H10.6 C10.6,11 14,11 14,8.5 C14,6 10,6 10,8.5z" fill="#4a78d0" stroke="#2a4a9a" stroke-width=".6"/><circle cx="11.9" cy="18.8" r="1.7" fill="#4a78d0" stroke="#2a4a9a" stroke-width=".6"/></svg><svg class="ic" style="left:33px;top:169px" width="22" height="22" viewBox="0 0 24 24"><path d="M3.5,5 V21 M20.5,5 V21" stroke="#222" stroke-width="1.3"/><path d="M4.5,8.5 H19.5" stroke="#e8dc00" stroke-width="1.6"/><path d="M4,8.5 L7.5,6.5 V10.5z M20,8.5 L16.5,6.5 V10.5z" fill="#e8dc00" stroke="#8a8400" stroke-width=".4"/></svg><svg class="ic" style="left:22.5px;top:170px" width="5" height="3" viewBox="0 0 5 3"><path d="M0 0h5L2.5 3z" fill="#000"/></svg><svg class="ic" style="left:47.5px;top:170px" width="5" height="3" viewBox="0 0 5 3"><path d="M0 0h5L2.5 3z" fill="#000"/></svg><svg class="ic" style="left:6px;top:195px" width="22" height="22" viewBox="0 0 24 24"><path d="M5,7 H19 L17.5,21 H6.5z" fill="#a8d8e8" stroke="#4a8aa8" stroke-width=".8"/><path d="M8,9 L9,19 M12,9 V19 M16,9 L15,19" stroke="#5aa0c0" stroke-width=".8"/><ellipse cx="12" cy="7" rx="7.2" ry="2" fill="#c8e8f4" stroke="#4a8aa8" stroke-width=".8"/><path d="M9,5.5 L11,2.5 L14,4 L13,6.5z" fill="#f0e8a0" stroke="#8a8a4a" stroke-width=".5"/><path d="M9,12 l3,3 l3,-3 M12,15 v-4" stroke="#38b038" stroke-width="1" fill="none"/></svg><svg class="ic" style="left:33px;top:195px" width="22" height="22" viewBox="0 0 24 24"><g><ellipse cx="13" cy="20.5" rx="8" ry="1.8" fill="#9a9a9a" opacity=".5"/><path d="M3,8.5 L11,2.5 L11,6 C18,6 21,11 18.5,16 C17.5,18.5 15,20 12.5,20 C15,17.5 15.5,13.5 11,12.5 L11,15z" fill="url(#gSil)" stroke="#8a8a8a" stroke-width=".6"/></g></svg><svg class="ic" style="left:22.5px;top:196px" width="5" height="3" viewBox="0 0 5 3"><path d="M0 0h5L2.5 3z" fill="#000"/></svg><svg class="ic" style="left:47.5px;top:196px" width="5" height="3" viewBox="0 0 5 3"><path d="M0 0h5L2.5 3z" fill="#000"/></svg><svg class="ic" style="left:6px;top:222px" width="22" height="22" viewBox="0 0 24 24"><rect x="3" y="3" width="2.2" height="14" fill="#555"/><path d="M3,17 l1.1,4 l1.1,-4z" fill="#e08020"/><circle cx="13" cy="12" r="6.8" fill="none" stroke="#b86a18" stroke-width="1.8"/><path d="M13,2.5 V21.5 M3.5,12 H22.5 M6.3,5.3 L19.7,18.7 M19.7,5.3 L6.3,18.7" stroke="#b86a18" stroke-width="1.3"/><circle cx="13" cy="12" r="2.4" fill="#e8a848" stroke="#8a4a10" stroke-width=".6"/><path d="M3,19 L21,17 L22,21 L4,22.5z" fill="#f08a18" opacity=".85"/><path d="M5,20.3 L20,18.6" stroke="#fff0c8" stroke-width=".8" stroke-dasharray="2 1.4"/></svg><svg class="ic" style="left:33px;top:222px" width="22" height="22" viewBox="0 0 24 24"><path d="M6,12 H16 L20,15.5 V22 H6z" fill="#fff" stroke="#111" stroke-width="1.2"/><path d="M2.5,5 L9,3.5 L11,5.5 L19,5 L19.5,15 L3.5,17z" fill="url(#gFold)" stroke="#c89a30" stroke-width=".6"/><path d="M3.5,17 L6,9.5 L21.5,8 L19.5,15z" fill="#f8dc88" stroke="#c89a30" stroke-width=".6"/><path d="M11,3 L15,2 L18,4 L17,6.5 L12,6z" fill="#38b838" stroke="#0e7a14" stroke-width=".4"/></svg><svg class="ic" style="left:22.5px;top:223px" width="5" height="3" viewBox="0 0 5 3"><path d="M0 0h5L2.5 3z" fill="#000"/></svg></div>
<div id="view"><svg id="model" width="1860" height="892" viewBox="60 109 1860 892" shape-rendering="crispEdges"><defs><linearGradient id="rol" x1="0" y1="0" x2="1" y2="0"><stop offset="0" stop-color="#6c6c6c"/><stop offset=".45" stop-color="#b4b4b4"/><stop offset="1" stop-color="#7c7c7c"/></linearGradient><linearGradient id="rolh" x1="0" y1="0" x2="1" y2="0"><stop offset="0" stop-color="#e8e8e8"/><stop offset="1" stop-color="#4a4a4a"/></linearGradient><linearGradient id="rod" x1="0" y1="0" x2="1" y2="0"><stop offset="0" stop-color="#d6d6e6"/><stop offset=".5" stop-color="#b4b4c8"/><stop offset="1" stop-color="#76768a"/></linearGradient><linearGradient id="cylg" x1="0" y1="0" x2="1" y2="0"><stop offset="0" stop-color="#c6c6d2"/><stop offset=".55" stop-color="#b4b4c2"/><stop offset="1" stop-color="#84848f"/></linearGradient><linearGradient id="cred" x1="0" y1="0" x2="1" y2="0"><stop offset="0" stop-color="#c80a0a"/><stop offset=".6" stop-color="#b00808"/><stop offset="1" stop-color="#7a0404"/></linearGradient><linearGradient id="cyel" x1="0" y1="0" x2="1" y2="0"><stop offset="0" stop-color="#f6f010"/><stop offset=".6" stop-color="#e6de08"/><stop offset="1" stop-color="#b8b000"/></linearGradient><linearGradient id="cgre" x1="0" y1="0" x2="1" y2="0"><stop offset="0" stop-color="#0ad43c"/><stop offset=".6" stop-color="#08c034"/><stop offset="1" stop-color="#06902a"/></linearGradient><linearGradient id="hand" x1="0" y1="0" x2="1" y2="0"><stop offset="0" stop-color="#737c6e"/><stop offset=".5" stop-color="#8a9384"/><stop offset="1" stop-color="#6f786b"/></linearGradient><linearGradient id="wmg" gradientUnits="userSpaceOnUse" x1="0" y1="509" x2="0" y2="540"><stop offset="0" stop-color="#f0761e"/><stop offset="1" stop-color="#fba21e"/></linearGradient><linearGradient id="wmy" gradientUnits="userSpaceOnUse" x1="0" y1="509" x2="0" y2="540"><stop offset="0" stop-color="#f8b41e"/><stop offset="1" stop-color="#f08a1e"/></linearGradient></defs><ellipse cx="1442" cy="827" rx="20" ry="23" fill="#7d8678" stroke="#0a0a12" stroke-width="1" shape-rendering="geometricPrecision"/>
<ellipse cx="1425" cy="879" rx="22.5" ry="24" fill="#7d8678" stroke="#0a0a12" stroke-width="1" shape-rendering="geometricPrecision"/>
<polygon points="1412,349 1431,840 1449,840 1429,349" fill="#aaabc1" stroke="#0a0a12" stroke-width="1.18"/>
<polygon points="1425.26,349 1445.04,840 1446.3,840 1426.45,349" fill="#74748c"/>
<polygon points="1426.45,349 1446.3,840 1447.56,840 1427.64,349" fill="#c2c2da"/>
<polyline points="1425.26,349 1445.04,840" fill="none" stroke="#0a0a12" stroke-width="1.18"/>
<polyline points="1426.45,349 1446.3,840" fill="none" stroke="#0a0a12" stroke-width="1.18"/>
<polyline points="1427.64,349 1447.56,840" fill="none" stroke="#0a0a12" stroke-width="1.18"/>
<polyline points="1412,349 1431,840 1449,840 1429,349 1412,349" fill="none" stroke="#0a0a12" stroke-width="1.18"/>
<path d="M1507,440.5 C1512.5,440.5 1516,445 1514.5,450 L1489,530 L1464,592 L1437.5,667 L1440,830 L1426,830 L1422.5,667 L1446,592 L1473,530 L1499,448 C1500,443 1503,440.5 1507,440.5z" fill="url(#hand)" stroke="#0a0a12" stroke-width="1"/>
<polyline points="1503,447 1478,530 1452,592 1428,667 1430,830" fill="none" stroke="#9aa394" stroke-width="2.2"/>
<polyline points="1489,478 1496,481 1505,477" fill="none" stroke="#0a0a12" stroke-width="1.18"/>
<polyline points="1474,527 1482,531 1490,527" fill="none" stroke="#0a0a12" stroke-width="1.18"/>
<polyline points="1452,580 1460,584 1469,580" fill="none" stroke="#0a0a12" stroke-width="1.18"/>
<polyline points="1425,664 1432,668 1438,663" fill="none" stroke="#0a0a12" stroke-width="1.18"/>
<polyline points="1424,690 1438,690" fill="none" stroke="#0a0a12" stroke-width="1.18"/>
<path d="M1437,642 L1447,648 L1450,700 L1454,800 L1452,842 L1441,850 L1439,700z" fill="#7d8678" stroke="#0a0a12" stroke-width="1"/>
<path d="M1446,690 L1446,705 L1437,705 M1440,745 L1435,745 M1441,762 L1452,762" fill="none" stroke="#0a0a12" stroke-width=".8"/>
<polygon points="1440,780 1454,800 1452,845 1436,880 1428,880 1428,790" fill="#6d766a" stroke="#0a0a12" stroke-width="1.18"/>
<polygon points="1425,835 1440,835 1440,870 1425,870" fill="#7d8678" stroke="#0a0a12" stroke-width="1.18"/>
<polyline points="1425,842 1440,840" fill="none" stroke="#0a0a12" stroke-width="1.18"/>
<polyline points="1425,862 1440,860" fill="none" stroke="#0a0a12" stroke-width="1.18"/>
<ellipse cx="1182" cy="884" rx="25" ry="25.5" fill="#7d8678" stroke="#0a0a12" stroke-width="1" shape-rendering="geometricPrecision"/>
<path d="M1172,878 L1192,876 L1187,888 L1177,889z" fill="#7d8678" stroke="#0a0a12" stroke-width=".8"/>
<polygon points="1362,688 1404,686 1408,860 1362,860" fill="#7d8678" stroke="#0a0a12" stroke-width="1.18"/>
<polyline points="1364,719 1404,717" fill="none" stroke="#0a0a12" stroke-width="1.18"/>
<polyline points="1364,743 1404,741" fill="none" stroke="#0a0a12" stroke-width="1.18"/>
<polyline points="1364,771 1404,769" fill="none" stroke="#0a0a12" stroke-width="1.18"/>
<polygon points="857,380 878,380 893.5,480 898,570 903.5,700 910,860 870,860 866,700 861,570" fill="#aaabc1" stroke="#0a0a12" stroke-width="1.18"/>
<polyline points="864,380 868,570 874,700 881,860" fill="none" stroke="#0a0a12" stroke-width="1.18"/>
<polyline points="868,380 870,570 878,700" fill="none" stroke="#0a0a12" stroke-width="1.18"/>
<polygon points="862,572 867.5,623 862,656 860,623" fill="#2b3b64" stroke="#0a0a12" stroke-width="1.18"/>
<polygon points="858,570 861,570 866,760 863,760" fill="#20294a"/>
<polygon points="893.5,480 896.5,478 900.5,570 906,700 908,742 905.5,742 903.5,700 898,570" fill="#08080e"/>
<polygon points="896.5,478 903.5,478 907.5,570 913,700 915,742 908,742 906,700 900.5,570" fill="#c8c8e0" stroke="#0a0a12" stroke-width="1.18"/>
<polygon points="874,360 1408,345.5 1408,366 874,381" fill="#aaabc1" stroke="#0a0a12" stroke-width="1.18"/>
<polygon points="874,362.94 1408,348.37 1408,352.88 874,367.56" fill="#d2d2ea"/>
<polygon points="874,377.64 1408,362.72 1408,366 874,381" fill="#9596ae"/>
<polyline points="874,362.94 1408,348.37" fill="none" stroke="#0a0a12" stroke-width="1.18"/>
<polyline points="874,367.56 1408,352.88" fill="none" stroke="#0a0a12" stroke-width="1.18"/>
<polyline points="874,377.64 1408,362.72" fill="none" stroke="#0a0a12" stroke-width="1.18"/>
<polyline points="874,360 1408,345.5 1408,366 874,381 874,360" fill="none" stroke="#0a0a12" stroke-width="1.18"/>
<polygon points="871.6,392 897,392 897,408.5 871.6,408.5" fill="#b9b9cf" stroke="#0a0a12" stroke-width="1.18"/>
<polygon points="867,408.5 894,408.5 894,425 867,425" fill="#aaabc1" stroke="#0a0a12" stroke-width="1.18"/>
<polygon points="860.5,425 890.5,425 890.5,457 860.5,457" fill="#aaabc1" stroke="#0a0a12" stroke-width="1.18"/>
<polygon points="891,425 905,425 905,456 891,456" fill="#aaabc1" stroke="#0a0a12" stroke-width="1.18"/>
<polygon points="895,409 904.7,409 904.7,425 895,425" fill="url(#rod)" stroke="#0a0a12" stroke-width="1.18"/>
<polyline points="872,416 878,416" fill="none" stroke="#0a0a12" stroke-width="2.36"/>
<polyline points="884,416 889,416" fill="none" stroke="#0a0a12" stroke-width="2.36"/>
<polygon points="907,428 915.5,428 911,456 902,456" fill="#9c9c9c" stroke="#0a0a12" stroke-width="1.18"/>
<polygon points="914,434 934,434 934,456 914,456" fill="#9c9c9c" stroke="#0a0a12" stroke-width="1.18"/>
<polygon points="1112,405.5 1365,400 1365,437 1112,449" fill="#aaabc1" stroke="#0a0a12" stroke-width="1.18"/>
<polyline points="1112,409.85 1365,403.7" fill="none" stroke="#0a0a12" stroke-width="1.18"/>
<polyline points="1112,415.07 1365,408.14" fill="none" stroke="#0a0a12" stroke-width="1.18"/>
<polyline points="1112,419.42 1365,411.84" fill="none" stroke="#0a0a12" stroke-width="1.18"/>
<polyline points="1112,435.95 1365,425.9" fill="none" stroke="#0a0a12" stroke-width="1.18"/>
<polyline points="1112,441.17 1365,430.34" fill="none" stroke="#0a0a12" stroke-width="1.18"/>
<polyline points="1112,445.52 1365,434.04" fill="none" stroke="#0a0a12" stroke-width="1.18"/>
<polygon points="1112,410 1178,408.6 1178,413 1112,415" fill="#0a0a12"/>
<polygon points="1104,448 1384,437 1386,448 1104,458" fill="#b9b9cf" stroke="#0a0a12" stroke-width="1.18"/>
<polyline points="1104,452 1385,441.5" fill="none" stroke="#0a0a12" stroke-width="1.18"/>
<polygon points="1100,420 1121,419 1121,432 1100,440" fill="#9c9c9c" stroke="#0a0a12" stroke-width="1.18"/>
<polygon points="1365,411 1372,411 1374,438 1367,438" fill="#b9b9cf" stroke="#0a0a12" stroke-width="1.18"/>
<polygon points="1180,373 1214,372 1215,380 1233,377 1340,374 1353,377 1354,368 1386,366 1378,404 1180,409" fill="#9c9c9c" stroke="#0a0a12" stroke-width="1.18"/>
<polygon points="1192,386 1212,379 1240,375 1335,373 1372,382 1372,392 1322,394 1322,390 1313,390 1311,396 1255,399 1252,393 1243,393 1243,401 1193,404" fill="#a2a2a2" stroke="#0a0a12" stroke-width="1.18"/>
<polyline points="1182,398 1243,396" fill="none" stroke="#0a0a12" stroke-width="1.18"/>
<polyline points="1322,392 1378,390" fill="none" stroke="#0a0a12" stroke-width="1.18"/>
<polyline points="1182,404 1378,398" fill="none" stroke="#0a0a12" stroke-width="1.18"/>
<ellipse cx="1282" cy="388.5" rx="1.5" ry="1.5" fill="#0a0a12" shape-rendering="geometricPrecision"/>
<path d="M1274,372 q2,-6 5,0 M1277,372 q2,-6 5,0 M1291,372 l1,-5 l3,5" fill="#b8b8c8" stroke="#0a0a12" stroke-width=".8"/>
<polygon points="1176,372 1182,372 1169,449 1160,449" fill="#9a9a9a" stroke="#0a0a12" stroke-width="1.18"/>
<polyline points="1180,372 1166,449" fill="none" stroke="#555" stroke-width="1.6"/>
<polygon points="1387,366 1394,366 1380,443 1370,443" fill="#9a9a9a" stroke="#0a0a12" stroke-width="1.18"/>
<polyline points="1392,366 1377,443" fill="none" stroke="#555" stroke-width="1.6"/>
<polygon points="941,398.5 1112,393.5 1102,450 929,454.5" fill="#d0d0d0" stroke="#0a0a12" stroke-width="1.18"/>
<polygon points="943.012,402.337 953.423,402.035 948.448,425.571 937.986,425.861" fill="#14141a"/>
<polygon points="944.887,403.118 952.561,402.896 949.42,417.745 941.722,417.962" fill="url(#rol)"/>
<polygon points="957.274,401.923 967.685,401.621 962.78,425.175 952.318,425.464" fill="#14141a"/>
<polygon points="959.151,402.705 966.825,402.482 963.728,417.343 956.03,417.56" fill="url(#rol)"/>
<polygon points="971.536,401.51 981.947,401.208 977.112,424.779 966.65,425.068" fill="#14141a"/>
<polygon points="973.415,402.292 981.089,402.069 978.037,416.941 970.339,417.158" fill="url(#rol)"/>
<polygon points="985.797,401.096 996.208,400.794 991.443,424.383 980.981,424.672" fill="#14141a"/>
<polygon points="987.679,401.879 995.353,401.656 992.345,416.539 984.647,416.755" fill="url(#rol)"/>
<polygon points="1000.06,400.682 1010.47,400.38 1005.78,423.986 995.313,424.276" fill="#14141a"/>
<polygon points="1001.94,401.465 1009.62,401.243 1006.65,416.137 998.955,416.353" fill="url(#rol)"/>
<polygon points="1014.32,400.268 1024.73,399.966 1020.11,423.59 1009.64,423.88" fill="#14141a"/>
<polygon points="1016.21,401.052 1023.88,400.83 1020.96,415.735 1013.26,415.951" fill="url(#rol)"/>
<polygon points="1028.58,399.855 1038.99,399.553 1034.44,423.194 1023.98,423.483" fill="#14141a"/>
<polygon points="1030.47,400.639 1038.15,400.417 1035.27,415.333 1027.57,415.549" fill="url(#rol)"/>
<polygon points="1042.84,399.441 1053.26,399.139 1048.77,422.798 1038.31,423.087" fill="#14141a"/>
<polygon points="1044.74,400.226 1052.41,400.004 1049.58,414.931 1041.88,415.147" fill="url(#rol)"/>
<polygon points="1057.11,399.027 1067.52,398.725 1063.1,422.401 1052.64,422.691" fill="#14141a"/>
<polygon points="1059,399.813 1066.67,399.591 1063.89,414.529 1056.19,414.745" fill="url(#rol)"/>
<polygon points="1071.37,398.614 1081.78,398.311 1077.43,422.005 1066.97,422.295" fill="#14141a"/>
<polygon points="1073.26,399.4 1080.94,399.177 1078.19,414.127 1070.5,414.343" fill="url(#rol)"/>
<polygon points="1085.63,398.2 1096.04,397.898 1091.77,421.609 1081.3,421.898" fill="#14141a"/>
<polygon points="1087.53,398.987 1095.2,398.764 1092.5,413.725 1084.81,413.941" fill="url(#rol)"/>
<polygon points="1099.89,397.786 1110.3,397.484 1106.1,421.213 1095.63,421.502" fill="#14141a"/>
<polygon points="1101.79,398.574 1109.47,398.351 1106.81,413.322 1099.11,413.539" fill="url(#rol)"/>
<polygon points="937.388,428.661 947.856,428.373 942.881,451.91 932.362,452.185" fill="#14141a"/>
<polygon points="939.274,429.445 946.99,429.233 943.849,444.083 936.109,444.288" fill="url(#rol)"/>
<polygon points="951.728,428.267 962.196,427.979 957.291,451.533 946.772,451.808" fill="#14141a"/>
<polygon points="953.616,429.051 961.333,428.839 958.236,443.7 950.496,443.906" fill="url(#rol)"/>
<polygon points="966.068,427.873 976.536,427.585 971.701,451.156 961.182,451.431" fill="#14141a"/>
<polygon points="967.959,428.658 975.675,428.446 972.622,443.318 964.882,443.523" fill="url(#rol)"/>
<polygon points="980.408,427.479 990.876,427.191 986.111,450.78 975.592,451.055" fill="#14141a"/>
<polygon points="982.301,428.264 990.018,428.052 987.009,442.935 979.269,443.141" fill="url(#rol)"/>
<polygon points="994.748,427.084 1005.22,426.797 1000.52,450.403 990.002,450.678" fill="#14141a"/>
<polygon points="996.644,427.87 1004.36,427.659 1001.4,442.553 993.656,442.758" fill="url(#rol)"/>
<polygon points="1009.09,426.69 1019.56,426.403 1014.93,450.026 1004.41,450.301" fill="#14141a"/>
<polygon points="1010.99,427.477 1018.7,427.265 1015.78,442.17 1008.04,442.376" fill="url(#rol)"/>
<polygon points="1023.43,426.296 1033.9,426.008 1029.34,449.65 1018.82,449.925" fill="#14141a"/>
<polygon points="1025.33,427.083 1033.05,426.872 1030.17,441.788 1022.43,441.993" fill="url(#rol)"/>
<polygon points="1037.77,425.902 1048.24,425.614 1043.75,449.273 1033.23,449.548" fill="#14141a"/>
<polygon points="1039.67,426.69 1047.39,426.478 1044.56,441.405 1036.82,441.611" fill="url(#rol)"/>
<polygon points="1052.11,425.508 1062.58,425.22 1058.16,448.896 1047.64,449.171" fill="#14141a"/>
<polygon points="1054.01,426.296 1061.73,426.085 1058.94,441.023 1051.2,441.228" fill="url(#rol)"/>
<polygon points="1066.45,425.114 1076.92,424.826 1072.57,448.52 1062.05,448.795" fill="#14141a"/>
<polygon points="1068.36,425.903 1076.07,425.691 1073.33,440.64 1065.59,440.846" fill="url(#rol)"/>
<polygon points="1080.79,424.719 1091.26,424.432 1086.98,448.143 1076.46,448.418" fill="#14141a"/>
<polygon points="1082.7,425.509 1090.42,425.297 1087.72,440.258 1079.98,440.463" fill="url(#rol)"/>
<polygon points="1095.13,424.325 1105.6,424.038 1101.39,447.766 1090.87,448.041" fill="#14141a"/>
<polygon points="1097.04,425.116 1104.76,424.904 1102.1,439.875 1094.36,440.081" fill="url(#rol)"/>
<polyline points="941,398.5 1112,393.5 1102,450 929,454.5 941,398.5" fill="none" stroke="#0a0a12" stroke-width="1.18"/>
<polygon points="1112,393.5 1114,394 1104,450.5 1102,450" fill="#707070" stroke="#0a0a12" stroke-width="1.18"/>
<polygon points="855,362 833,458 852.5,458 875,362" fill="#aaabc1" stroke="#0a0a12" stroke-width="1.18"/>
<polygon points="855.4,362 833.39,458 835.34,458 857.4,362" fill="#c6c6de"/>
<polygon points="866.6,362 844.31,458 846.455,458 868.8,362" fill="#74748c"/>
<polygon points="868.8,362 846.455,458 848.6,458 871,362" fill="#c2c2da"/>
<polyline points="857.4,362 835.34,458" fill="none" stroke="#0a0a12" stroke-width="1.18"/>
<polyline points="866.6,362 844.31,458" fill="none" stroke="#0a0a12" stroke-width="1.18"/>
<polyline points="868.8,362 846.455,458" fill="none" stroke="#0a0a12" stroke-width="1.18"/>
<polyline points="871,362 848.6,458" fill="none" stroke="#0a0a12" stroke-width="1.18"/>
<polyline points="855,362 833,458 852.5,458 875,362 855,362" fill="none" stroke="#0a0a12" stroke-width="1.18"/>
<polygon points="855,359 875,359 875,363 855,363" fill="#b9b9cf" stroke="#0a0a12" stroke-width="1.18"/>
<polygon points="1408,348 1387,445 1410,445 1428.7,348" fill="#aaabc1" stroke="#0a0a12" stroke-width="1.18"/>
<polygon points="1408.41,348 1387.46,445 1389.76,445 1410.48,348" fill="#c6c6de"/>
<polygon points="1420.42,348 1400.8,445 1403.1,445 1422.49,348" fill="#74748c"/>
<polygon points="1422.49,348 1403.1,445 1405.4,445 1424.56,348" fill="#c2c2da"/>
<polyline points="1410.48,348 1389.76,445" fill="none" stroke="#0a0a12" stroke-width="1.18"/>
<polyline points="1420.42,348 1400.8,445" fill="none" stroke="#0a0a12" stroke-width="1.18"/>
<polyline points="1422.49,348 1403.1,445" fill="none" stroke="#0a0a12" stroke-width="1.18"/>
<polyline points="1424.56,348 1405.4,445" fill="none" stroke="#0a0a12" stroke-width="1.18"/>
<polyline points="1408,348 1387,445 1410,445 1428.7,348 1408,348" fill="none" stroke="#0a0a12" stroke-width="1.18"/>
<polygon points="907,478 947,478 1047,474 947,491 947,526 907,530" fill="#9c9c9c" stroke="#0a0a12" stroke-width="1.18"/>
<polygon points="987,497 1086,473.5 1091,474 1024,497" fill="#9c9c9c" stroke="#0a0a12" stroke-width="1.18"/>
<polygon points="1158,468 1376,462 1374,489 1158,492" fill="#9c9c9c" stroke="#0a0a12" stroke-width="1.18"/>
<polygon points="1196,471 1250,470 1250,480 1226,481 1226,486 1196,487" fill="#a4a4a4" stroke="#0a0a12" stroke-width="1.18"/>
<polygon points="1337,466 1374,465 1374,479 1312,481 1306,487 1337,478" fill="#a4a4a4" stroke="#0a0a12" stroke-width="1.18"/>
<path d="M1250,479 L1253,471 L1262,469.5 L1285,469.5 L1283,478.5z" fill="#b4b4c8" stroke="#0a0a12" stroke-width=".7"/>
<ellipse cx="1273" cy="474" rx="1.8" ry="2.2" fill="#b4b4c8" stroke="#0a0a12" stroke-width="1" shape-rendering="geometricPrecision"/>
<polygon points="1158,486 1184,486 1184,493 1158,493" fill="#aaabc1" stroke="#0a0a12" stroke-width="1.18"/>
<polygon points="1183,485.5 1187.55,485.5 1187.55,491.5 1183,491.5" fill="url(#rolh)" stroke="#0a0a12" stroke-width="1.18"/>
<polygon points="1190.33,485.5 1194.88,485.5 1194.88,491.5 1190.33,491.5" fill="url(#rolh)" stroke="#0a0a12" stroke-width="1.18"/>
<polygon points="1197.67,485.5 1202.21,485.5 1202.21,491.5 1197.67,491.5" fill="url(#rolh)" stroke="#0a0a12" stroke-width="1.18"/>
<polygon points="1205,485.5 1209.55,485.5 1209.55,491.5 1205,491.5" fill="url(#rolh)" stroke="#0a0a12" stroke-width="1.18"/>
<polygon points="1212.33,485.5 1216.88,485.5 1216.88,491.5 1212.33,491.5" fill="url(#rolh)" stroke="#0a0a12" stroke-width="1.18"/>
<polygon points="1219.67,485.5 1224.21,485.5 1224.21,491.5 1219.67,491.5" fill="url(#rolh)" stroke="#0a0a12" stroke-width="1.18"/>
<polygon points="1308,482 1312.75,482 1312.75,488.5 1308,488.5" fill="url(#rolh)" stroke="#0a0a12" stroke-width="1.18"/>
<polygon points="1315.67,482 1320.42,482 1320.42,488.5 1315.67,488.5" fill="url(#rolh)" stroke="#0a0a12" stroke-width="1.18"/>
<polygon points="1323.33,482 1328.09,482 1328.09,488.5 1323.33,488.5" fill="url(#rolh)" stroke="#0a0a12" stroke-width="1.18"/>
<polygon points="1331,482 1335.75,482 1335.75,488.5 1331,488.5" fill="url(#rolh)" stroke="#0a0a12" stroke-width="1.18"/>
<polygon points="1338.67,482 1343.42,482 1343.42,488.5 1338.67,488.5" fill="url(#rolh)" stroke="#0a0a12" stroke-width="1.18"/>
<polygon points="1346.33,482 1351.09,482 1351.09,488.5 1346.33,488.5" fill="url(#rolh)" stroke="#0a0a12" stroke-width="1.18"/>
<polygon points="1180,520 1308,517 1334,516 1343,497 1354,495 1356,560 1360,690 1232,694 1226,560 1182,540" fill="#d2d2d2" stroke="#0a0a12" stroke-width="1.18"/>
<polyline points="1227,572.5 1356,563.5" fill="none" stroke="#0a0a12" stroke-width="1.18"/>
<polyline points="1227.6,586.1 1356.4,577.1" fill="none" stroke="#0a0a12" stroke-width="1.18"/>
<polyline points="1228.2,599.7 1356.8,590.7" fill="none" stroke="#0a0a12" stroke-width="1.18"/>
<polyline points="1228.8,613.3 1357.2,604.3" fill="none" stroke="#0a0a12" stroke-width="1.18"/>
<polyline points="1229.4,626.9 1357.6,617.9" fill="none" stroke="#0a0a12" stroke-width="1.18"/>
<polyline points="1230,640.5 1358,631.5" fill="none" stroke="#0a0a12" stroke-width="1.18"/>
<polyline points="1230.6,654.1 1358.4,645.1" fill="none" stroke="#0a0a12" stroke-width="1.18"/>
<polyline points="1231.2,667.7 1358.8,658.7" fill="none" stroke="#0a0a12" stroke-width="1.18"/>
<polyline points="1231.8,681.3 1359.2,672.3" fill="none" stroke="#0a0a12" stroke-width="1.18"/>
<polyline points="1232.4,694.9 1359.6,685.9" fill="none" stroke="#0a0a12" stroke-width="1.18"/>
<polyline points="1182,530 1308,526" fill="none" stroke="#0a0a12" stroke-width="1.18"/>
<polygon points="1308,517 1334,517 1334,537 1308,537" fill="#aaabc1" stroke="#0a0a12" stroke-width="1.18"/>
<polyline points="1308,527 1334,526" fill="none" stroke="#0a0a12" stroke-width="1.18"/>
<polygon points="1186,528 1222,527 1225,533 1190,534" fill="#9a9ab4" stroke="#0a0a12" stroke-width="1.18"/>
<polygon points="1353,483 1367,482 1376,690 1359,690" fill="#505050" stroke="#0a0a12" stroke-width="1.18"/>
<polyline points="1354.5,496 1358,485" fill="none" stroke="#9a9a9a" stroke-width="1"/>
<polyline points="1354.67,502 1358.2,491" fill="none" stroke="#9a9a9a" stroke-width="1"/>
<polyline points="1354.84,508 1358.4,497" fill="none" stroke="#9a9a9a" stroke-width="1"/>
<polyline points="1355.01,514 1358.6,503" fill="none" stroke="#9a9a9a" stroke-width="1"/>
<polyline points="1355.18,520 1358.8,509" fill="none" stroke="#9a9a9a" stroke-width="1"/>
<polyline points="1355.35,526 1359,515" fill="none" stroke="#9a9a9a" stroke-width="1"/>
<polyline points="1355.52,532 1359.2,521" fill="none" stroke="#9a9a9a" stroke-width="1"/>
<polyline points="1355.69,538 1359.4,527" fill="none" stroke="#9a9a9a" stroke-width="1"/>
<polyline points="1355.86,544 1359.6,533" fill="none" stroke="#9a9a9a" stroke-width="1"/>
<polyline points="1356.03,550 1359.8,539" fill="none" stroke="#9a9a9a" stroke-width="1"/>
<polyline points="1356.2,556 1360,545" fill="none" stroke="#9a9a9a" stroke-width="1"/>
<polyline points="1356.37,562 1360.2,551" fill="none" stroke="#9a9a9a" stroke-width="1"/>
<polyline points="1356.54,568 1360.4,557" fill="none" stroke="#9a9a9a" stroke-width="1"/>
<polyline points="1356.71,574 1360.6,563" fill="none" stroke="#9a9a9a" stroke-width="1"/>
<polyline points="1356.88,580 1360.8,569" fill="none" stroke="#9a9a9a" stroke-width="1"/>
<polyline points="1357.05,586 1361,575" fill="none" stroke="#9a9a9a" stroke-width="1"/>
<polyline points="1357.22,592 1361.2,581" fill="none" stroke="#9a9a9a" stroke-width="1"/>
<polyline points="1357.39,598 1361.4,587" fill="none" stroke="#9a9a9a" stroke-width="1"/>
<polyline points="1357.56,604 1361.6,593" fill="none" stroke="#9a9a9a" stroke-width="1"/>
<polyline points="1357.73,610 1361.8,599" fill="none" stroke="#9a9a9a" stroke-width="1"/>
<polyline points="1357.9,616 1362,605" fill="none" stroke="#9a9a9a" stroke-width="1"/>
<polyline points="1358.07,622 1362.2,611" fill="none" stroke="#9a9a9a" stroke-width="1"/>
<polyline points="1358.24,628 1362.4,617" fill="none" stroke="#9a9a9a" stroke-width="1"/>
<polyline points="1358.41,634 1362.6,623" fill="none" stroke="#9a9a9a" stroke-width="1"/>
<polyline points="1358.58,640 1362.8,629" fill="none" stroke="#9a9a9a" stroke-width="1"/>
<polyline points="1358.75,646 1363,635" fill="none" stroke="#9a9a9a" stroke-width="1"/>
<polyline points="1358.92,652 1363.2,641" fill="none" stroke="#9a9a9a" stroke-width="1"/>
<polyline points="1359.09,658 1363.4,647" fill="none" stroke="#9a9a9a" stroke-width="1"/>
<polyline points="1359.26,664 1363.6,653" fill="none" stroke="#9a9a9a" stroke-width="1"/>
<polyline points="1359.43,670 1363.8,659" fill="none" stroke="#9a9a9a" stroke-width="1"/>
<polyline points="1359.6,676 1364,665" fill="none" stroke="#9a9a9a" stroke-width="1"/>
<polyline points="1359.77,682 1364.2,671" fill="none" stroke="#9a9a9a" stroke-width="1"/>
<polyline points="1359.94,688 1364.4,677" fill="none" stroke="#9a9a9a" stroke-width="1"/>
<polyline points="1360.11,694 1364.6,683" fill="none" stroke="#9a9a9a" stroke-width="1"/>
<polyline points="1359.5,496 1363,485" fill="none" stroke="#9a9a9a" stroke-width="1"/>
<polyline points="1359.7,502 1363.23,491" fill="none" stroke="#9a9a9a" stroke-width="1"/>
<polyline points="1359.9,508 1363.46,497" fill="none" stroke="#9a9a9a" stroke-width="1"/>
<polyline points="1360.1,514 1363.69,503" fill="none" stroke="#9a9a9a" stroke-width="1"/>
<polyline points="1360.3,520 1363.92,509" fill="none" stroke="#9a9a9a" stroke-width="1"/>
<polyline points="1360.5,526 1364.15,515" fill="none" stroke="#9a9a9a" stroke-width="1"/>
<polyline points="1360.7,532 1364.38,521" fill="none" stroke="#9a9a9a" stroke-width="1"/>
<polyline points="1360.9,538 1364.61,527" fill="none" stroke="#9a9a9a" stroke-width="1"/>
<polyline points="1361.1,544 1364.84,533" fill="none" stroke="#9a9a9a" stroke-width="1"/>
<polyline points="1361.3,550 1365.07,539" fill="none" stroke="#9a9a9a" stroke-width="1"/>
<polyline points="1361.5,556 1365.3,545" fill="none" stroke="#9a9a9a" stroke-width="1"/>
<polyline points="1361.7,562 1365.53,551" fill="none" stroke="#9a9a9a" stroke-width="1"/>
<polyline points="1361.9,568 1365.76,557" fill="none" stroke="#9a9a9a" stroke-width="1"/>
<polyline points="1362.1,574 1365.99,563" fill="none" stroke="#9a9a9a" stroke-width="1"/>
<polyline points="1362.3,580 1366.22,569" fill="none" stroke="#9a9a9a" stroke-width="1"/>
<polyline points="1362.5,586 1366.45,575" fill="none" stroke="#9a9a9a" stroke-width="1"/>
<polyline points="1362.7,592 1366.68,581" fill="none" stroke="#9a9a9a" stroke-width="1"/>
<polyline points="1362.9,598 1366.91,587" fill="none" stroke="#9a9a9a" stroke-width="1"/>
<polyline points="1363.1,604 1367.14,593" fill="none" stroke="#9a9a9a" stroke-width="1"/>
<polyline points="1363.3,610 1367.37,599" fill="none" stroke="#9a9a9a" stroke-width="1"/>
<polyline points="1363.5,616 1367.6,605" fill="none" stroke="#9a9a9a" stroke-width="1"/>
<polyline points="1363.7,622 1367.83,611" fill="none" stroke="#9a9a9a" stroke-width="1"/>
<polyline points="1363.9,628 1368.06,617" fill="none" stroke="#9a9a9a" stroke-width="1"/>
<polyline points="1364.1,634 1368.29,623" fill="none" stroke="#9a9a9a" stroke-width="1"/>
<polyline points="1364.3,640 1368.52,629" fill="none" stroke="#9a9a9a" stroke-width="1"/>
<polyline points="1364.5,646 1368.75,635" fill="none" stroke="#9a9a9a" stroke-width="1"/>
<polyline points="1364.7,652 1368.98,641" fill="none" stroke="#9a9a9a" stroke-width="1"/>
<polyline points="1364.9,658 1369.21,647" fill="none" stroke="#9a9a9a" stroke-width="1"/>
<polyline points="1365.1,664 1369.44,653" fill="none" stroke="#9a9a9a" stroke-width="1"/>
<polyline points="1365.3,670 1369.67,659" fill="none" stroke="#9a9a9a" stroke-width="1"/>
<polyline points="1365.5,676 1369.9,665" fill="none" stroke="#9a9a9a" stroke-width="1"/>
<polyline points="1365.7,682 1370.13,671" fill="none" stroke="#9a9a9a" stroke-width="1"/>
<polyline points="1365.9,688 1370.36,677" fill="none" stroke="#9a9a9a" stroke-width="1"/>
<polyline points="1366.1,694 1370.59,683" fill="none" stroke="#9a9a9a" stroke-width="1"/>
<polyline points="1364,496 1366.5,487" fill="none" stroke="#9a9a9a" stroke-width="1"/>
<polyline points="1364.23,502 1366.76,493" fill="none" stroke="#9a9a9a" stroke-width="1"/>
<polyline points="1364.46,508 1367.02,499" fill="none" stroke="#9a9a9a" stroke-width="1"/>
<polyline points="1364.69,514 1367.28,505" fill="none" stroke="#9a9a9a" stroke-width="1"/>
<polyline points="1364.92,520 1367.54,511" fill="none" stroke="#9a9a9a" stroke-width="1"/>
<polyline points="1365.15,526 1367.8,517" fill="none" stroke="#9a9a9a" stroke-width="1"/>
<polyline points="1365.38,532 1368.06,523" fill="none" stroke="#9a9a9a" stroke-width="1"/>
<polyline points="1365.61,538 1368.32,529" fill="none" stroke="#9a9a9a" stroke-width="1"/>
<polyline points="1365.84,544 1368.58,535" fill="none" stroke="#9a9a9a" stroke-width="1"/>
<polyline points="1366.07,550 1368.84,541" fill="none" stroke="#9a9a9a" stroke-width="1"/>
<polyline points="1366.3,556 1369.1,547" fill="none" stroke="#9a9a9a" stroke-width="1"/>
<polyline points="1366.53,562 1369.36,553" fill="none" stroke="#9a9a9a" stroke-width="1"/>
<polyline points="1366.76,568 1369.62,559" fill="none" stroke="#9a9a9a" stroke-width="1"/>
<polyline points="1366.99,574 1369.88,565" fill="none" stroke="#9a9a9a" stroke-width="1"/>
<polyline points="1367.22,580 1370.14,571" fill="none" stroke="#9a9a9a" stroke-width="1"/>
<polyline points="1367.45,586 1370.4,577" fill="none" stroke="#9a9a9a" stroke-width="1"/>
<polyline points="1367.68,592 1370.66,583" fill="none" stroke="#9a9a9a" stroke-width="1"/>
<polyline points="1367.91,598 1370.92,589" fill="none" stroke="#9a9a9a" stroke-width="1"/>
<polyline points="1368.14,604 1371.18,595" fill="none" stroke="#9a9a9a" stroke-width="1"/>
<polyline points="1368.37,610 1371.44,601" fill="none" stroke="#9a9a9a" stroke-width="1"/>
<polyline points="1368.6,616 1371.7,607" fill="none" stroke="#9a9a9a" stroke-width="1"/>
<polyline points="1368.83,622 1371.96,613" fill="none" stroke="#9a9a9a" stroke-width="1"/>
<polyline points="1369.06,628 1372.22,619" fill="none" stroke="#9a9a9a" stroke-width="1"/>
<polyline points="1369.29,634 1372.48,625" fill="none" stroke="#9a9a9a" stroke-width="1"/>
<polyline points="1369.52,640 1372.74,631" fill="none" stroke="#9a9a9a" stroke-width="1"/>
<polyline points="1369.75,646 1373,637" fill="none" stroke="#9a9a9a" stroke-width="1"/>
<polyline points="1369.98,652 1373.26,643" fill="none" stroke="#9a9a9a" stroke-width="1"/>
<polyline points="1370.21,658 1373.52,649" fill="none" stroke="#9a9a9a" stroke-width="1"/>
<polyline points="1370.44,664 1373.78,655" fill="none" stroke="#9a9a9a" stroke-width="1"/>
<polyline points="1370.67,670 1374.04,661" fill="none" stroke="#9a9a9a" stroke-width="1"/>
<polyline points="1370.9,676 1374.3,667" fill="none" stroke="#9a9a9a" stroke-width="1"/>
<polyline points="1371.13,682 1374.56,673" fill="none" stroke="#9a9a9a" stroke-width="1"/>
<polyline points="1371.36,688 1374.82,679" fill="none" stroke="#9a9a9a" stroke-width="1"/>
<polyline points="1371.59,694 1375.08,685" fill="none" stroke="#9a9a9a" stroke-width="1"/>
<polygon points="1372,594 1385,594 1391,688 1377,688" fill="#aaabc1" stroke="#0a0a12" stroke-width="1.18"/>
<polygon points="1381.6,593 1394,592 1394,612 1382.5,613" fill="#b9b9cf" stroke="#0a0a12" stroke-width="1.18"/>
<polygon points="1182,556 1226,556 1234,694 1190,694" fill="#aaabc1" stroke="#0a0a12" stroke-width="1.18"/>
<polygon points="1161,560 1182,560 1190,690 1169,690" fill="#aaabc1" stroke="#0a0a12" stroke-width="1.18"/>
<polygon points="1163,577 1167,577 1167.5,603 1164.5,603" fill="#2a3960"/>
<polygon points="1177,620 1184.5,620 1174.5,661 1167.5,661" fill="#66667e" stroke="#0a0a12" stroke-width="1.18"/>
<polyline points="1181,620 1171,661" fill="none" stroke="#b4b4cc" stroke-width="1"/>
<polygon points="1170,680 1176,680 1172,694 1167,694" fill="#66667e" stroke="#0a0a12" stroke-width="1.18"/>
<polygon points="1163.6,605.7 1183.4,605.7 1183.4,619.5 1163.6,619.5" fill="#aaabc1" stroke="#0a0a12" stroke-width="1.18"/>
<polygon points="1166,662 1204,661 1204,677 1166,678" fill="#aaabc1" stroke="#0a0a12" stroke-width="1.18"/>
<polygon points="1166,667.6 1204,666.6 1204,670.6 1166,671.6" fill="#d2d2ea"/>
<polyline points="1166,667.6 1204,666.6" fill="none" stroke="#0a0a12" stroke-width="1.18"/>
<polyline points="1166,671.6 1204,670.6" fill="none" stroke="#0a0a12" stroke-width="1.18"/>
<polyline points="1187,647 1358,642" fill="none" stroke="#ff2cf0" stroke-width="1.1"/>
<polygon points="943,500 1343,490 1343,516 943,527" fill="#aaabc1" stroke="#0a0a12" stroke-width="1.18"/>
<polygon points="943,500.54 1343,490.52 1343,494.42 943,504.59" fill="#d2d2ea"/>
<polyline points="943,504.59 1343,494.42" fill="none" stroke="#0a0a12" stroke-width="1.18"/>
<polyline points="943,512.96 1343,502.48" fill="none" stroke="#0a0a12" stroke-width="1.18"/>
<polygon points="1167,524 1178,523.5 1176,540 1165,540" fill="url(#rod)" stroke="#0a0a12" stroke-width="1.18"/>
<polygon points="954,539.5 978,539.5 978,545 954,545" fill="#aaabc1" stroke="#0a0a12" stroke-width="1.18"/>
<polygon points="1130,523 1175,523 1175,540 1130,540" fill="#aaabc1" stroke="#0a0a12" stroke-width="1.18"/>
<polyline points="1130,531 1175,530" fill="none" stroke="#0a0a12" stroke-width="1.18"/>
<polygon points="912,699 1109,692 1109,703 912,710" fill="#aaabc1" stroke="#0a0a12" stroke-width="1.18"/>
<polyline points="912,704.5 1109,697.5" fill="none" stroke="#0a0a12" stroke-width="1.18"/>
<polygon points="912,709 1109,702 1109,704 912,711.5" fill="#606078"/>
<polygon points="912,684.6 1030.5,680 1030.5,696.5 912,699" fill="#aaabc1" stroke="#0a0a12" stroke-width="1.18"/>
<polygon points="1030,688 1061,687 1061,698 1030,700" fill="#aaabc1" stroke="#0a0a12" stroke-width="1.18"/>
<polyline points="1030,692.8 1061,691.4" fill="none" stroke="#0a0a12" stroke-width="1.18"/>
<polygon points="1060.5,680 1146,677 1146,700 1060.5,703" fill="#aaabc1" stroke="#0a0a12" stroke-width="1.18"/>
<polyline points="1060.5,695.64 1146,692.64" fill="none" stroke="#0a0a12" stroke-width="1.18"/>
<polygon points="944,705.6 994,705.6 994,718 944,718" fill="#aaabc1" stroke="#0a0a12" stroke-width="1.18"/>
<polygon points="1109,701 1146,701 1146,714 1109,714" fill="#aaabc1" stroke="#0a0a12" stroke-width="1.18"/>
<polygon points="883,761 1148,752 1148,760 883,768" fill="#aaabc1" stroke="#0a0a12" stroke-width="1.18"/>
<polygon points="883,744.8 1017.7,740 1017.7,755.7 883,761" fill="#aaabc1" stroke="#0a0a12" stroke-width="1.18"/>
<polygon points="1047.8,739 1148,736.5 1148,754 1047.8,757" fill="#aaabc1" stroke="#0a0a12" stroke-width="1.18"/>
<polygon points="922,766 974,766 974,787 922,787" fill="#aaabc1" stroke="#0a0a12" stroke-width="1.18"/>
<polyline points="922,778 974,776" fill="none" stroke="#0a0a12" stroke-width="1.18"/>
<polygon points="1087,762 1140,762 1140,783 1087,783" fill="#aaabc1" stroke="#0a0a12" stroke-width="1.18"/>
<polyline points="1087,773 1140,771" fill="none" stroke="#0a0a12" stroke-width="1.18"/>
<polygon points="988.5,772 1087,769 1087,784 988.5,787" fill="#aaabc1" stroke="#0a0a12" stroke-width="1.18"/>
<polygon points="996,767 1075,764 1077,770 998,773" fill="#d4d4ea" stroke="#0a0a12" stroke-width="1.18"/>
<polygon points="975,766 986,766 981,787 971,787" fill="#b9b9cf" stroke="#0a0a12" stroke-width="1.18"/>
<polygon points="914.5,768.5 924,768.5 924,788 914.5,788" fill="url(#rod)" stroke="#0a0a12" stroke-width="1.18"/>
<polygon points="1139,765 1150,765 1150,772 1139,772" fill="#d8d8ec" stroke="#0a0a12" stroke-width="1.18"/>
<polygon points="1216,717 1341,713 1342,746 1218,751" fill="#d2d2d2" stroke="#0a0a12" stroke-width="1.18"/>
<polyline points="1217,733 1341,729" fill="none" stroke="#0a0a12" stroke-width="1.18"/>
<polygon points="1218,751 1342,746 1342,768 1220,770" fill="#7d8678" stroke="#0a0a12" stroke-width="1.18"/>
<polygon points="1299,752 1306,752 1306,766 1299,766" fill="#7d8678" stroke="#0a0a12" stroke-width="1.18"/>
<path d="M1193,716 L1365,711 L1367,778 L1196,786z M1216,718 L1341,714 L1342,763 Q1342,767 1337,767 L1224,771 Q1218,771 1218,766z" fill="#aaabc1" fill-rule="evenodd" stroke="#0a0a12" stroke-width=".9"/>
<polygon points="1184,735 1196,733 1198,786 1190,787 1184,770" fill="#7d8678" stroke="#0a0a12" stroke-width="1.18"/>
<polygon points="1166,738 1184,738 1184,760 1166,760" fill="#aaabc1" stroke="#0a0a12" stroke-width="1.18"/>
<polygon points="1167,695 1397,690 1397,710 1167,716" fill="#aaabc1" stroke="#0a0a12" stroke-width="1.18"/>
<polygon points="1167,697.94 1397,692.8 1397,697.2 1167,702.56" fill="#d2d2ea"/>
<polygon points="1167,712.64 1397,706.8 1397,710 1167,716" fill="#9596ae"/>
<polyline points="1167,697.94 1397,692.8" fill="none" stroke="#0a0a12" stroke-width="1.18"/>
<polyline points="1167,702.56 1397,697.2" fill="none" stroke="#0a0a12" stroke-width="1.18"/>
<polyline points="1167,712.64 1397,706.8" fill="none" stroke="#0a0a12" stroke-width="1.18"/>
<polyline points="1167,695 1397,690 1397,710 1167,716 1167,695" fill="none" stroke="#0a0a12" stroke-width="1.18"/>
<polygon points="1091,807 1158,806 1158,856 1083,858" fill="#aaabc1" stroke="#0a0a12" stroke-width="1.18"/>
<polyline points="1089,822 1158,820" fill="none" stroke="#0a0a12" stroke-width="1.18"/>
<polyline points="1086,838 1158,836" fill="none" stroke="#0a0a12" stroke-width="1.18"/>
<polygon points="1157,813 1183,813 1183,855 1157,855" fill="#7d8678" stroke="#0a0a12" stroke-width="1.18"/>
<polyline points="1157,829 1183,828" fill="none" stroke="#0a0a12" stroke-width="1.18"/>
<polyline points="1157,846 1183,845" fill="none" stroke="#0a0a12" stroke-width="1.77"/>
<polygon points="1368,799 1402,797 1404,821 1368,821" fill="#7d8678" stroke="#0a0a12" stroke-width="1.18"/>
<polygon points="1197,803.7 1368,799 1368,815.5 1197,821" fill="#aaabc1" stroke="#0a0a12" stroke-width="1.18"/>
<polygon points="1183,824 1357,819 1357,846 1183,851" fill="#a6a7bd" stroke="#0a0a12" stroke-width="1.18"/>
<polyline points="1183,832.64 1357,827.64" fill="none" stroke="#0a0a12" stroke-width="1.18"/>
<polygon points="1357,819 1404,818 1404,845 1357,846" fill="#b9b9cf" stroke="#0a0a12" stroke-width="1.18"/>
<polygon points="1183,851 1404,846 1404,854 1183,860" fill="#aaabc1" stroke="#0a0a12" stroke-width="1.18"/>
<polygon points="880,812 910,812 910,858 882,860" fill="#aaabc1" stroke="#0a0a12" stroke-width="1.18"/>
<polygon points="910,813 925,813 925,828 910,828" fill="#aaabc1" stroke="#0a0a12" stroke-width="1.18"/>
<polygon points="914,828 925,828 925,838 914,838" fill="url(#rod)" stroke="#0a0a12" stroke-width="1.18"/>
<polygon points="991,809 1007,809 1007,828 991,828" fill="#aaabc1" stroke="#0a0a12" stroke-width="1.18"/>
<polygon points="971,810 991,810 985,861 960,861" fill="#aaabc1" stroke="#0a0a12" stroke-width="1.18"/>
<polyline points="976,810 966,861" fill="none" stroke="#e4e4f6" stroke-width="1.5"/>
<polyline points="987,810 979,861" fill="none" stroke="#0a0a12" stroke-width="2.36"/>
<polygon points="1066,808 1086,808 1076,859 1052,859" fill="#aaabc1" stroke="#0a0a12" stroke-width="1.18"/>
<polyline points="1071,808 1058,859" fill="none" stroke="#e4e4f6" stroke-width="1.5"/>
<polyline points="1082,808 1070,859" fill="none" stroke="#0a0a12" stroke-width="2.36"/>
<polygon points="1078,882 1123,882 1123,887 1078,887" fill="#aaabc1" stroke="#0a0a12" stroke-width="1.18"/>
<polygon points="1321,875 1425,875 1425,880 1321,880" fill="#aaabc1" stroke="#0a0a12" stroke-width="1.18"/>
<polygon points="853.6,887.5 906.5,887.5 906.5,893 853.6,893" fill="#aaabc1" stroke="#0a0a12" stroke-width="1.18"/>
<polygon points="1141,562 1151,787 1171,787 1162,562" fill="#aaabc1" stroke="#0a0a12" stroke-width="1.18"/>
<polygon points="1141.63,562 1151.6,787 1155,787 1145.2,562" fill="#c6c6de"/>
<polygon points="1155.7,562 1165,787 1166.6,787 1157.38,562" fill="#74748c"/>
<polygon points="1157.38,562 1166.6,787 1168.2,787 1159.06,562" fill="#c2c2da"/>
<polyline points="1145.2,562 1155,787" fill="none" stroke="#0a0a12" stroke-width="1.18"/>
<polyline points="1155.7,562 1165,787" fill="none" stroke="#0a0a12" stroke-width="1.18"/>
<polyline points="1157.38,562 1166.6,787" fill="none" stroke="#0a0a12" stroke-width="1.18"/>
<polyline points="1159.06,562 1168.2,787" fill="none" stroke="#0a0a12" stroke-width="1.18"/>
<polyline points="1141,562 1151,787 1171,787 1162,562 1141,562" fill="none" stroke="#0a0a12" stroke-width="1.18"/>
<polygon points="852,458 1388,445 1388,466 852,479.6" fill="#aaabc1" stroke="#0a0a12" stroke-width="1.18"/>
<polygon points="852,461.024 1388,447.94 1388,452.56 852,465.776" fill="#d2d2ea"/>
<polygon points="852,476.144 1388,462.64 1388,466 852,479.6" fill="#9596ae"/>
<polyline points="852,461.024 1388,447.94" fill="none" stroke="#0a0a12" stroke-width="1.18"/>
<polyline points="852,465.776 1388,452.56" fill="none" stroke="#0a0a12" stroke-width="1.18"/>
<polyline points="852,476.144 1388,462.64" fill="none" stroke="#0a0a12" stroke-width="1.18"/>
<polyline points="852,458 1388,445 1388,466 852,479.6 852,458" fill="none" stroke="#0a0a12" stroke-width="1.18"/>
<polygon points="857,548 1392,535 1392,556 857,568" fill="#aaabc1" stroke="#0a0a12" stroke-width="1.18"/>
<polygon points="857,550.8 1392,537.94 1392,542.56 857,555.2" fill="#d2d2ea"/>
<polygon points="857,564.8 1392,552.64 1392,556 857,568" fill="#9596ae"/>
<polyline points="857,550.8 1392,537.94" fill="none" stroke="#0a0a12" stroke-width="1.18"/>
<polyline points="857,555.2 1392,542.56" fill="none" stroke="#0a0a12" stroke-width="1.18"/>
<polyline points="857,564.8 1392,552.64" fill="none" stroke="#0a0a12" stroke-width="1.18"/>
<polyline points="857,548 1392,535 1392,556 857,568 857,548" fill="none" stroke="#0a0a12" stroke-width="1.18"/>
<polygon points="868,790 1400,776 1400,796 868,811" fill="#aaabc1" stroke="#0a0a12" stroke-width="1.18"/>
<polygon points="868,792.94 1400,778.8 1400,783.2 868,797.56" fill="#d2d2ea"/>
<polygon points="868,807.64 1400,792.8 1400,796 868,811" fill="#9596ae"/>
<polyline points="868,792.94 1400,778.8" fill="none" stroke="#0a0a12" stroke-width="1.18"/>
<polyline points="868,797.56 1400,783.2" fill="none" stroke="#0a0a12" stroke-width="1.18"/>
<polyline points="868,807.64 1400,792.8" fill="none" stroke="#0a0a12" stroke-width="1.18"/>
<polyline points="868,790 1400,776 1400,796 868,811 868,790" fill="none" stroke="#0a0a12" stroke-width="1.18"/>
<polygon points="871,866 1405,854 1405,873 871,888" fill="#aaabc1" stroke="#0a0a12" stroke-width="1.18"/>
<polygon points="871,869.08 1405,856.66 1405,860.84 871,873.92" fill="#d2d2ea"/>
<polygon points="871,884.48 1405,869.96 1405,873 871,888" fill="#9596ae"/>
<polyline points="871,869.08 1405,856.66" fill="none" stroke="#0a0a12" stroke-width="1.18"/>
<polyline points="871,873.92 1405,860.84" fill="none" stroke="#0a0a12" stroke-width="1.18"/>
<polyline points="871,884.48 1405,869.96" fill="none" stroke="#0a0a12" stroke-width="1.18"/>
<polyline points="871,866 1405,854 1405,873 871,888 871,866" fill="none" stroke="#0a0a12" stroke-width="1.18"/>
<polygon points="833,458 852,892 872,892 852.5,458" fill="#aaabc1" stroke="#0a0a12" stroke-width="1.18"/>
<polygon points="833.585,458 852.6,892 856,892 836.9,458" fill="#c6c6de"/>
<polygon points="846.65,458 866,892 867.6,892 848.21,458" fill="#74748c"/>
<polygon points="848.21,458 867.6,892 869.2,892 849.77,458" fill="#c2c2da"/>
<polyline points="836.9,458 856,892" fill="none" stroke="#0a0a12" stroke-width="1.18"/>
<polyline points="846.65,458 866,892" fill="none" stroke="#0a0a12" stroke-width="1.18"/>
<polyline points="848.21,458 867.6,892" fill="none" stroke="#0a0a12" stroke-width="1.18"/>
<polyline points="849.77,458 869.2,892" fill="none" stroke="#0a0a12" stroke-width="1.18"/>
<polyline points="833,458 852,892 872,892 852.5,458 833,458" fill="none" stroke="#0a0a12" stroke-width="1.18"/>
<polygon points="1387,447 1405,877 1427,877 1409,447" fill="#aaabc1" stroke="#0a0a12" stroke-width="1.18"/>
<polygon points="1387.66,447 1405.66,877 1409.4,877 1391.4,447" fill="#c6c6de"/>
<polygon points="1402.4,447 1420.4,877 1422.16,877 1404.16,447" fill="#74748c"/>
<polygon points="1404.16,447 1422.16,877 1423.92,877 1405.92,447" fill="#c2c2da"/>
<polyline points="1391.4,447 1409.4,877" fill="none" stroke="#0a0a12" stroke-width="1.18"/>
<polyline points="1402.4,447 1420.4,877" fill="none" stroke="#0a0a12" stroke-width="1.18"/>
<polyline points="1404.16,447 1422.16,877" fill="none" stroke="#0a0a12" stroke-width="1.18"/>
<polyline points="1405.92,447 1423.92,877" fill="none" stroke="#0a0a12" stroke-width="1.18"/>
<polyline points="1387,447 1405,877 1427,877 1409,447 1387,447" fill="none" stroke="#0a0a12" stroke-width="1.18"/>
<polygon points="832,456.5 852,456.5 852,460 832,460" fill="#b9b9cf" stroke="#0a0a12" stroke-width="1.18"/>
<polygon points="1386,445.5 1409,445.5 1409,449 1386,449" fill="#b9b9cf" stroke="#0a0a12" stroke-width="1.18"/>
<polygon points="881.5,896 888.5,896 888.5,933 881.5,933" fill="url(#rod)" stroke="#0a0a12" stroke-width="1.18"/>
<polygon points="879.5,932 890.5,932 890.5,938 879.5,938" fill="#b4b4c8" stroke="#0a0a12" stroke-width="1.18"/>
<ellipse cx="885" cy="940" rx="7.5" ry="2.6" fill="#c0c0d2" stroke="#0a0a12" stroke-width="1" shape-rendering="geometricPrecision"/>
<polygon points="1397.5,892 1404.5,892 1404.5,920 1397.5,920" fill="url(#rod)" stroke="#0a0a12" stroke-width="1.18"/>
<polygon points="1395.5,919 1406.5,919 1406.5,925 1395.5,925" fill="#b4b4c8" stroke="#0a0a12" stroke-width="1.18"/>
<ellipse cx="1401" cy="927" rx="7.5" ry="2.6" fill="#c0c0d2" stroke="#0a0a12" stroke-width="1" shape-rendering="geometricPrecision"/>
<path d="M858,894 L896,894 L896,899 C884,908 876,914 870,924 L858,924 z" fill="#b4b4ca" stroke="#0a0a12" stroke-width="1"/>
<ellipse cx="856" cy="918" rx="14" ry="15.5" fill="#b8b8cc" stroke="#0a0a12" stroke-width="1" shape-rendering="geometricPrecision"/>
<ellipse cx="857.5" cy="918" rx="11.5" ry="13" fill="#c4c4d8" stroke="#0a0a12" stroke-width="1" shape-rendering="geometricPrecision"/>
<polygon points="857,901 868,901 868,922 857,922" fill="#b0b0c6" stroke="#0a0a12" stroke-width="1.18"/>
<ellipse cx="859" cy="921" rx="4.2" ry="4.5" fill="#c8c8da" stroke="#0a0a12" stroke-width="1" shape-rendering="geometricPrecision"/>
<path d="M1377,882 L1415,882 L1415,887 C1403,896 1395,902 1389,912 L1377,912 z" fill="#b4b4ca" stroke="#0a0a12" stroke-width="1"/>
<ellipse cx="1375" cy="906" rx="14" ry="15.5" fill="#b8b8cc" stroke="#0a0a12" stroke-width="1" shape-rendering="geometricPrecision"/>
<ellipse cx="1376.5" cy="906" rx="11.5" ry="13" fill="#c4c4d8" stroke="#0a0a12" stroke-width="1" shape-rendering="geometricPrecision"/>
<polygon points="1376,889 1387,889 1387,910 1376,910" fill="#b0b0c6" stroke="#0a0a12" stroke-width="1.18"/>
<ellipse cx="1378" cy="909" rx="4.2" ry="4.5" fill="#c8c8da" stroke="#0a0a12" stroke-width="1" shape-rendering="geometricPrecision"/>
<polyline points="1150,806 1150.5,822" fill="none" stroke="#22c83a" stroke-width="1.6"/>
<path d="M1147,847 l3,-8 l2,6 l-2,5z" fill="#2bc4d6"/>
<path d="M1415.5,294 L1421.5,294 L1424,341 L1418,341z" fill="url(#rod)" stroke="#0a0a12" stroke-width=".7"/>
<ellipse cx="1420.7" cy="343" rx="14.5" ry="4.6" fill="#cfcfe0" stroke="#0a0a12" stroke-width="1" shape-rendering="geometricPrecision"/>
<ellipse cx="1420.7" cy="342.4" rx="11" ry="3" fill="#dcdcec" shape-rendering="geometricPrecision"/>
<path d="M1418,338 L1424,338 L1424.3,343 L1418.2,343z" fill="url(#rod)"/>
<path d="M1406,242 L1427,242 L1428.8,291 Q1419,297 1408,291z" fill="url(#cylg)" stroke="#0a0a12" stroke-width=".8"/>
<path d="M1405.4,225.5 Q1415,229.5 1426,225.5 L1427,242.5 Q1416,247 1406,242.5z" fill="url(#cgre)" stroke="#0a0a12" stroke-width=".8"/>
<path d="M1404.5,208.5 Q1414,212.5 1425,208.5 L1426,225.5 Q1415,230 1405.4,225.5z" fill="url(#cyel)" stroke="#0a0a12" stroke-width=".8"/>
<path d="M1404,191 Q1414,195 1424.2,191 L1425,208.5 Q1414,213 1404.5,208.5z" fill="url(#cred)" stroke="#0a0a12" stroke-width=".8"/>
<path d="M1403.2,184.5 L1403.6,190 Q1413.5,195 1424.6,190 L1424.4,184.5z" fill="url(#cylg)" stroke="#0a0a12" stroke-width=".7"/>
<ellipse cx="1413.8" cy="184.5" rx="10.6" ry="3.6" fill="#e4e4ee" stroke="#0a0a12" stroke-width="1" shape-rendering="geometricPrecision"/>
<ellipse cx="1413.8" cy="184.3" rx="6.5" ry="2" fill="#f2f2f8" stroke="#888" stroke-width="1" shape-rendering="geometricPrecision"/>
<g id="wm" shape-rendering="geometricPrecision"><g fill="url(#wmg)"><path d="M891.3,516.5 L893.2,518 V538 H891.3z"/><path d="M894.8,511.5 L897.9,514 V536.5 L894.8,537.5z"/><path d="M899,507.6 L902.6,511 V535 L899,536.6z"/><path d="M936.2,516.5 L934.2,518 V538 H936.2z"/><path d="M932.7,511.5 L929.5,514 V536.5 L932.7,537.5z"/><path d="M928,507.6 L924.8,511 V535 L928,536.6z"/><path d="M891.3,539.8 H936.2 V537.6 H927 Q921,537.4 917.5,535.6 L916,537.6 H911.5 L910,535.6 Q906.5,537.4 900.5,537.6 H891.3z"/><path d="M912.6,510 C905.5,511.5 902.6,519 904.4,526.5 C905.8,532.5 910.5,536.6 915.6,537.2 C911,534 908.2,529 908.6,523 C909,517.5 911,513.5 912.6,510z" fill="url(#wmy)"/><path d="M912.6,516 L914,536 C919,534.2 922.6,529.5 922.6,524.2 C922.5,521.2 921.2,519.4 920,518.4 C920.6,523 918.2,527.4 915.6,528.6 L914.9,516.8z"/></g><text x="946.6" y="528" font-family="'Liberation Sans','Noto Sans CJK SC',sans-serif" font-size="16.4" font-weight="500" fill="url(#wmg)" stroke="#f5901e" stroke-width=".35" textLength="82" lengthAdjust="spacingAndGlyphs">智造资料网</text><text x="947" y="537.9" font-family="'Liberation Sans',sans-serif" font-size="4.7" font-weight="bold" fill="#f0901e" textLength="81.6" lengthAdjust="spacingAndGlyphs">INTELLIGENT MANUFACTURING DATA</text></g></svg><div class="vbtn" style="left:4px;top:4px"><svg class="ic" style="left:0px;top:0px" width="24" height="24" viewBox="0 0 24 24"><rect x="3.5" y="4.2" width="17" height="4" rx=".8" fill="#3f578c" stroke="#5a72a8" stroke-width=".5"/><rect x="3.5" y="10" width="17" height="4" rx=".8" fill="#3f578c" stroke="#5a72a8" stroke-width=".5"/><rect x="3.5" y="15.8" width="17" height="4" rx=".8" fill="#3f578c" stroke="#5a72a8" stroke-width=".5"/></svg></div><div class="vbtn" style="left:32px;top:4px"><svg class="ic" style="left:0px;top:0px" width="24" height="24" viewBox="0 0 24 24"><rect x="7.2" y="7.7" width="11.6" height="10" fill="url(#gDoc)" stroke="#556" stroke-width=".6"/><path d="M3.3,3.8 l3.4,0 l-1.1,1.1 l1.6,1.6 l-1.2,1.2 l-1.6,-1.6 l-1.1,1.1z" fill="#38c838" stroke="#0e8a0e" stroke-width=".4"/><path d="M22.3,3.8 l-3.4,0 l1.1,1.1 l-1.6,1.6 l1.2,1.2 l1.6,-1.6 l1.1,1.1z" fill="#38c838" stroke="#0e8a0e" stroke-width=".4"/><path d="M3.3,21.6 l3.4,0 l-1.1,-1.1 l1.6,-1.6 l-1.2,-1.2 l-1.6,1.6 l-1.1,-1.1z" fill="#38c838" stroke="#0e8a0e" stroke-width=".4"/><path d="M22.3,21.6 l-3.4,0 l1.1,-1.1 l-1.6,-1.6 l1.2,-1.2 l1.6,1.6 l1.1,-1.1z" fill="#38c838" stroke="#0e8a0e" stroke-width=".4"/></svg></div><div class="vbtn" style="left:60px;top:4px"><svg class="ic" style="left:0px;top:0px" width="24" height="24" viewBox="0 0 24 24"><path d="M5,8.5 C8,5.5 12,5.5 14,7 M4.5,12 C7,9.5 10,9.5 11.5,11 M5.5,15.5 C7,13.8 9,13.8 10.5,14.6" fill="none" stroke="#b0bccc" stroke-width="1.7"/><path d="M11.73,15.934999999999999 L7,20.5" stroke="#8c8c8c" stroke-width="3" stroke-linecap="round"/><path d="M11.73,15.934999999999999 L7,20.5" stroke="#d8d8d8" stroke-width="1.2" stroke-linecap="round"/><circle cx="15.6" cy="12.2" r="5.6" fill="url(#gLens)" stroke="#9aa0aa" stroke-width="1.4"/></svg></div><div class="vbtn" style="left:88px;top:4px"><svg class="ic" style="left:0px;top:0px" width="24" height="24" viewBox="0 0 24 24"><path d="M2,14.5 L12,8 L23,13.5 L13,21z" fill="none" stroke="#5a5a6a" stroke-width=".6"/><path d="M10.8,14.7 V5.699999999999999" stroke="#1c6cf0" stroke-width="1.8"/><path d="M8.4,6.699999999999999 L10.8,2.6999999999999993 L13.200000000000001,6.699999999999999z" fill="#1c6cf0"/><path d="M10.8,14.7 L17.8,8.7" stroke="#2eb82e" stroke-width="1.8"/><path d="M20.3,6.5 l-4.2,0.6 l2.6,3.0z" fill="#2eb82e"/><path d="M10.8,14.7 L17.8,19.2" stroke="#e01818" stroke-width="1.8"/><path d="M20.3,20.7 l-2.2,-3.8 l-2.0,3.2z" fill="#e01818"/><circle cx="10.8" cy="14.7" r="1.8" fill="#e8e8e8" stroke="#666" stroke-width=".5"/></svg></div><div class="vbtn" style="left:116px;top:4px"><svg class="ic" style="left:0px;top:0px" width="24" height="24" viewBox="0 0 24 24"><path d="M12.5,3 V12.7 M3.3,16 L12.5,12.7 L22.2,15.2" fill="none" stroke="#000" stroke-width="1"/><polygon points="3.3,6.8 12.5,3 22.2,6.3 12.8,10.7" fill="#34d828"/><path d="M3.3,6.8 12.5,3 22.2,6.3 12.8,10.7z M3.3,6.8 V16 L12.8,21.8 L22.2,15.2 V6.3 M12.8,10.7 V21.8" fill="none" stroke="#000" stroke-width="1.5" stroke-linejoin="round"/></svg></div><div class="vbtn" style="left:144px;top:4px"><svg class="ic" style="left:0px;top:0px" width="24" height="24" viewBox="0 0 24 24"><polygon points="3.3,16 12.5,12.7 22.2,15.2 12.8,21.8" fill="#22b01c"/><path d="M12.5,3 V12.7 M3.3,16 L12.5,12.7 L22.2,15.2" fill="none" stroke="#000" stroke-width="1"/><path d="M3.3,6.8 12.5,3 22.2,6.3 12.8,10.7z M3.3,6.8 V16 L12.8,21.8 L22.2,15.2 V6.3 M12.8,10.7 V21.8" fill="none" stroke="#000" stroke-width="1.5" stroke-linejoin="round"/></svg></div><div class="vbtn" style="left:172px;top:4px"><svg class="ic" style="left:0px;top:0px" width="24" height="24" viewBox="0 0 24 24"><polygon points="3.3,6.8 12.5,3 12.5,12.7 3.3,16" fill="#22b01c"/><path d="M12.5,3 V12.7 M3.3,16 L12.5,12.7 L22.2,15.2" fill="none" stroke="#000" stroke-width="1"/><path d="M3.3,6.8 12.5,3 22.2,6.3 12.8,10.7z M3.3,6.8 V16 L12.8,21.8 L22.2,15.2 V6.3 M12.8,10.7 V21.8" fill="none" stroke="#000" stroke-width="1.5" stroke-linejoin="round"/></svg></div><div class="vbtn" style="left:200px;top:4px"><svg class="ic" style="left:0px;top:0px" width="24" height="24" viewBox="0 0 24 24"><path d="M12.5,3 V12.7 M3.3,16 L12.5,12.7 L22.2,15.2" fill="none" stroke="#000" stroke-width="1"/><polygon points="12.8,10.7 22.2,6.3 22.2,15.2 12.8,21.8" fill="#22b01c"/><path d="M3.3,6.8 12.5,3 22.2,6.3 12.8,10.7z M3.3,6.8 V16 L12.8,21.8 L22.2,15.2 V6.3 M12.8,10.7 V21.8" fill="none" stroke="#000" stroke-width="1.5" stroke-linejoin="round"/></svg></div><div class="vbtn" style="left:228px;top:4px"><svg class="ic" style="left:0px;top:0px" width="24" height="24" viewBox="0 0 24 24"><path d="M12.5,3 V12.7 M3.3,16 L12.5,12.7 L22.2,15.2" fill="none" stroke="#000" stroke-width="1"/><polygon points="3.3,6.8 12.8,10.7 12.8,21.8 3.3,16" fill="#34d828"/><path d="M3.3,6.8 12.5,3 22.2,6.3 12.8,10.7z M3.3,6.8 V16 L12.8,21.8 L22.2,15.2 V6.3 M12.8,10.7 V21.8" fill="none" stroke="#000" stroke-width="1.5" stroke-linejoin="round"/></svg></div><div class="vbtn" style="left:256px;top:4px"><svg class="ic" style="left:0px;top:0px" width="24" height="24" viewBox="0 0 24 24"><polygon points="12.5,3 22.2,6.3 22.2,15.2 12.5,12.7" fill="#22b01c"/><path d="M12.5,3 V12.7 M3.3,16 L12.5,12.7 L22.2,15.2" fill="none" stroke="#000" stroke-width="1"/><path d="M3.3,6.8 12.5,3 22.2,6.3 12.8,10.7z M3.3,6.8 V16 L12.8,21.8 L22.2,15.2 V6.3 M12.8,10.7 V21.8" fill="none" stroke="#000" stroke-width="1.5" stroke-linejoin="round"/></svg></div><div class="vbtn" style="left:284px;top:4px"><svg class="ic" style="left:0px;top:0px" width="24" height="24" viewBox="0 0 24 24"><path d="M12.5,3 V12.7 M3.3,16 L12.5,12.7 L22.2,15.2" fill="none" stroke="#000" stroke-width="1"/><polygon points="3.3,6.8 12.5,3 22.2,6.3 12.8,10.7" fill="#34d828"/><polygon points="3.3,6.8 12.8,10.7 12.8,21.8 3.3,16" fill="#34d828"/><polygon points="12.8,10.7 22.2,6.3 22.2,15.2 12.8,21.8" fill="#22b01c"/><path d="M3.3,6.8 12.5,3 22.2,6.3 12.8,10.7z M3.3,6.8 V16 L12.8,21.8 L22.2,15.2 V6.3 M12.8,10.7 V21.8" fill="none" stroke="#0e8a0e" stroke-width=".8" stroke-linejoin="round"/></svg></div><div class="vbtn" style="left:4px;top:32px"><svg class="ic" style="left:0px;top:0px" width="24" height="24" viewBox="0 0 24 24"><path d="M7,6.4 V17.599999999999998 A5.0,2.1 0 0 0 17,17.599999999999998 V6.4z" fill="none" stroke="#222" stroke-width="1"/><ellipse cx="12.0" cy="6.4" rx="5.0" ry="2.1" fill="none" stroke="#222" stroke-width="1"/><path d="M7,17.599999999999998 A5.0,2.1 0 0 1 17,17.599999999999998" fill="none" stroke="#222" stroke-width="0.7"/></svg></div><div class="vbtn" style="left:4px;top:60px"><svg class="ic" style="left:0px;top:0px" width="24" height="24" viewBox="0 0 24 24"><path d="M7,6.4 V17.599999999999998 A5.0,2.1 0 0 0 17,17.599999999999998 V6.4z" fill="none" stroke="#222" stroke-width="1"/><ellipse cx="12.0" cy="6.4" rx="5.0" ry="2.1" fill="none" stroke="#222" stroke-width="1"/></svg></div><div class="vbtn vsel" style="left:4px;top:88px"><svg class="ic" style="left:-1px;top:-1px" width="24" height="24" viewBox="0 0 24 24"><ellipse cx="15.5" cy="19.4" rx="5.0" ry="1.6" fill="#30303a" opacity=".55"/><path d="M7,6.4 V17.599999999999998 A5.0,2.1 0 0 0 17,17.599999999999998 V6.4z" fill="url(#gB)" stroke="#0c0c18" stroke-width="1.2"/><ellipse cx="12.0" cy="6.4" rx="5.0" ry="2.1" fill="url(#gBt)" stroke="#0c0c18" stroke-width="1.2"/></svg></div><div class="vbtn" style="left:4px;top:116px"><svg class="ic" style="left:0px;top:0px" width="24" height="24" viewBox="0 0 24 24"><ellipse cx="15.5" cy="19.4" rx="5.0" ry="1.6" fill="#30303a" opacity=".55"/><path d="M7,6.4 V17.599999999999998 A5.0,2.1 0 0 0 17,17.599999999999998 V6.4z" fill="url(#gLB)" stroke="#5a6478" stroke-width="0.9"/><ellipse cx="12.0" cy="6.4" rx="5.0" ry="2.1" fill="#eef2fa" stroke="#5a6478" stroke-width="0.9"/><path d="M7,17.599999999999998 A5.0,2.1 0 0 1 17,17.599999999999998" fill="none" stroke="#5a6478" stroke-width="0.63"/></svg></div><div class="vbtn" style="left:4px;top:144px"><svg class="ic" style="left:0px;top:0px" width="24" height="24" viewBox="0 0 24 24"><path d="M7,6.4 V17.599999999999998 A5.0,2.1 0 0 0 17,17.599999999999998 V6.4z" fill="#e8e8e8" stroke="#222" stroke-width="1"/><ellipse cx="12.0" cy="6.4" rx="5.0" ry="2.1" fill="#f4f4f4" stroke="#222" stroke-width="1"/><path d="M8.5,7 L11,19 M11,7 L8.5,19 M12.5,7 L15.5,19.5 M15.5,7 L13,19.5" stroke="#222" stroke-width=".7" fill="none"/></svg></div><svg id="ovl" style="position:absolute;left:0;top:0" width="1860" height="892" viewBox="60 109 1860 892" font-family="'Liberation Sans','Noto Sans CJK SC',sans-serif">
<defs>
<linearGradient id="gArc" x1="0" y1="0" x2="0" y2="1"><stop offset="0" stop-color="#3fd6a0"/><stop offset="1" stop-color="#d8d84a"/></linearGradient>
<radialGradient id="gGauge" cx=".5" cy=".4" r=".7"><stop offset="0" stop-color="#3a4158"/><stop offset="1" stop-color="#262b3c"/></radialGradient>
</defs>
<!-- axis triad -->
<g>
<path d="M119.5,916.5 H145 V939.5 H119.5z" fill="#7a8c5c"/>
<path d="M119.5,916.5 H134 V915.8 H145 V936" fill="none" stroke="#f4f000" stroke-width="1.2"/>
<path d="M119.5,943 V948.5 H144.5 V942" fill="none" stroke="#c8c8d0" stroke-width=".9"/>
<path d="M118,941 L115.6,957" stroke="#18d8e8" stroke-width="2.4"/>
<path d="M112,957 l6,-1.5 l1.5,4 l-3,3.5 l-4.5,-1z" fill="#18d8e8"/>
<rect x="116.6" y="903" width="2.8" height="37" fill="#10d820"/>
<path d="M118,893.5 L122.2,904.5 H113.8z" fill="#10e020"/>
<rect x="120" y="939.6" width="26" height="2.8" fill="#f01010"/>
<path d="M155,941 L145,936.5 V945.5z" fill="#e00808"/>
<circle cx="118.2" cy="941" r="3.2" fill="#909090"/><circle cx="117.4" cy="940.2" r="1.4" fill="#c8c8c8"/>
<text x="112" y="891.5" font-size="10.5" fill="#d4d8e0">Y</text>
<text x="156.5" y="945" font-size="10.5" fill="#d4d8e0">X</text>
<text x="110.5" y="968.5" font-size="10.5" fill="#d4d8e0">Z</text>
</g>
<!-- floating widget -->
<g>
<circle cx="1813" cy="884.6" r="28.5" fill="#1f2433" opacity=".55"/>
<path d="M1813,864.5 H1884 a19.6,19.6 0 0 1 0,39.3 H1813z" fill="#242a3a"/>
<path d="M1838,883.5 H1900" stroke="#323a4e" stroke-width="1"/>
<circle cx="1813" cy="884.6" r="27.5" fill="url(#gGauge)" stroke="#394055" stroke-width="1.2"/>
<path d="M1831,864.5 A26,26 0 0 1 1814.5,910.4" fill="none" stroke="url(#gArc)" stroke-width="1.6"/>
<text x="1796.5" y="890.3" font-size="23.5" fill="#e4e6ee" letter-spacing="-.5">50</text>
<text x="1824.5" y="891" font-size="9.5" fill="#e4e6ee">%</text>
<path d="M1849.6,868.5 v6 M1846.6,871.5 l3,-3 l3,3" fill="none" stroke="#4ea8e8" stroke-width="1.3"/>
<path d="M1849.6,889.5 v6 M1846.6,892.5 l3,3 l3,-3" fill="none" stroke="#28b428" stroke-width="1.3"/>
<text x="1894.5" y="877" font-size="9" fill="#e8eaf0" text-anchor="end"><tspan font-size="11" font-weight="bold">0</tspan>K/s</text>
<text x="1894.5" y="898.5" font-size="9" fill="#e8eaf0" text-anchor="end"><tspan font-size="11" font-weight="bold">0.1</tspan>K/s</text>
<rect x="1748" y="793.6" width="156" height="70" rx="7" fill="#b9d8ee"/>
<rect x="1731.5" y="799.6" width="171" height="59" rx="6.5" fill="#fff" stroke="#1b7fc4" stroke-width="1.5"/>
<text x="1743" y="826" font-size="24" font-weight="bold" fill="#000">A</text>
<path d="M1781.5,810.6 A8.1,8.1 0 1 1 1774.2,823.2 A6.6,6.6 0 0 0 1781.5,810.6z" fill="#000"/>
<path d="M1747,836.5 q1.2,1.6 -1.2,4" stroke="#000" stroke-width="1.6" fill="none"/><circle cx="1759" cy="850.2" r="1.1" fill="#000"/>
<path d="M1772.3,839 l4.5,-1.2 q4.5,2 9,0 l4.8,1.2 v5.2 h-3.6 v8.6 h-11.2 v-8.6 h-3.5z" fill="#000"/>
<circle cx="1893.5" cy="822.2" r="4.7" fill="#e60020"/>
<!-- doraemon -->
<path d="M1857,826 C1878,818 1896,830 1899,848 C1902,860 1892,868 1872,866 L1846,866 C1852,850 1852,836 1857,826z" fill="#0a96dc" stroke="#1a4a70" stroke-width=".5"/>
<ellipse cx="1905.5" cy="851.5" rx="11" ry="10.5" fill="#fff" stroke="#b0a8a0" stroke-width=".6" transform="rotate(25 1905.5 851.5)"/>
<path d="M1866,862 q14,4 30,0 l-2,3 q-14,3 -26,0z" fill="#fff"/>
<ellipse cx="1826" cy="853" rx="19" ry="13" fill="#0a96dc"/>
<path d="M1846,866 C1838,870 1838,856 1842,850 L1856,846z" fill="#0a96dc"/>
<circle cx="1841" cy="824" r="31" fill="#0a96dc" stroke="#1a4a70" stroke-width=".5"/>
<path d="M1822,848 q14,16 42,-6" fill="none" stroke="#d81818" stroke-width="2.2"/>
<ellipse cx="1835.5" cy="826" rx="28.5" ry="23.5" fill="#fff" stroke="#a09890" stroke-width=".5" transform="rotate(-8 1835.5 826)"/>
<ellipse cx="1836" cy="805" rx="8.2" ry="9.6" fill="#fff" stroke="#807870" stroke-width=".6" transform="rotate(-12 1836 805)"/>
<ellipse cx="1849.5" cy="809" rx="8.6" ry="10" fill="#fff" stroke="#807870" stroke-width=".6" transform="rotate(-12 1849.5 809)"/>
<path d="M1832.5,806 q3.5,3.2 7,-.5" fill="none" stroke="#000" stroke-width="1"/>
<ellipse cx="1844.6" cy="810.6" rx="1.8" ry="2.6" fill="#000"/><ellipse cx="1844.8" cy="810.4" rx=".6" ry="1" fill="#fff"/>
<circle cx="1835" cy="814.5" r="4.6" fill="#e60020"/><circle cx="1836.2" cy="813" r="1.3" fill="#fff"/>
<path d="M1833.5,819 q-6,14 -9,28" fill="none" stroke="#706860" stroke-width=".6"/>
<path d="M1811,832 q20,18 48,2" fill="none" stroke="#706860" stroke-width=".7"/>
<path d="M1810,811 l14,6 M1808,818 l14,3 M1810,826 l13,-1 M1841,826 l16,3 M1840,830 l17,9 M1843,823 l16,-3" fill="none" stroke="#706860" stroke-width=".5"/>
<circle cx="1814" cy="842" r="7.4" fill="#fff" stroke="#a09890" stroke-width=".6"/>
<ellipse cx="1848.5" cy="853.5" rx="8" ry="7" fill="#fff" stroke="#a09890" stroke-width=".6"/>
<circle cx="1832.4" cy="858.5" r="4.6" fill="#f2d024" stroke="#a08010" stroke-width=".6"/><path d="M1828,857.5 h9" stroke="#a08010" stroke-width=".7"/><circle cx="1832.6" cy="860" r="1.1" fill="#6a4a10"/>
</g>
</svg>
</div>
<div id="status"><div class="ln"></div>
<div class="grip" style="left:1337px;top:3px;height:15px"></div>
<div style="position:absolute;left:1341px;top:2px;width:131px;height:16px;background:#fff"></div>
<svg class="ic" style="left:1459px;top:4px" width="13" height="13" viewBox="0 0 13 13"><circle cx="8" cy="5" r="3.4" fill="#fff" stroke="#3b6ab0" stroke-width="1.3"/><path d="M5.5 7.5L1.5 11.5" stroke="#2d5aa0" stroke-width="1.6"/></svg>
<div class="grip" style="left:1475px;top:3px;height:15px"></div>
<div class="t" style="left:1486px;top:2px;letter-spacing:0">绝对 XY 上视图</div>
<div class="vs" style="left:1592px;top:3px;height:14px"></div>
<div class="t" style="left:1601px;top:2px">绝对视图</div>
<div class="grip" style="left:1658px;top:3px;height:15px"></div>
<div class="t" style="left:1668px;top:2px;font-weight:bold;letter-spacing:-.1px">LAYER0</div>
<div class="vs" style="left:1726px;top:3px;height:14px"></div>
<div class="vs" style="left:1757px;top:3px;height:14px"></div>
<div class="sw" style="left:1761px"></div>
<div class="vs" style="left:1800px;top:3px;height:14px"></div>
<div class="sw" style="left:1805px"></div>
<div class="vs" style="left:1843px;top:3px;height:14px"></div>
<div class="sw" style="left:1848px"></div>
<div class="vs" style="left:1886px;top:3px;height:14px"></div>
<svg class="ic" style="left:1893px;top:2px" width="15" height="15" viewBox="0 0 15 15"><circle cx="7.5" cy="7.5" r="6.5" fill="#1c2fb0"/><path d="M4 3c2-1 3 0 4 1s2 0 3 1-1 3-2 3-1 2-2 3-2-1-2-2-2-1-2-3 0-2 1-3z" fill="#2ea52e"/><circle cx="5.5" cy="4.5" r="1.6" fill="#fff" opacity=".55"/><circle cx="7.5" cy="7.5" r="6.5" fill="none" stroke="#0a1460" stroke-width=".8"/></svg>
<div class="vs" style="left:1131px;top:24px;height:14px"></div>
<div class="t" style="left:1140px;top:22px">拴牢</div>
<div class="vs" style="left:1174px;top:24px;height:14px"></div>
<div class="vs" style="left:1205px;top:24px;height:14px"></div>
<div class="vs" style="left:1236px;top:24px;height:14px"></div>
<div class="vs" style="left:1267px;top:24px;height:14px"></div>
<div class="vs" style="left:1298px;top:24px;height:14px"></div>
<div class="vs" style="left:1330px;top:24px;height:14px"></div>
<div class="vs" style="left:1361px;top:24px;height:14px"></div>
<div class="vs" style="left:1392px;top:24px;height:14px"></div>
<div class="vs" style="left:1423px;top:24px;height:14px"></div>
<div class="vs" style="left:1454px;top:24px;height:14px"></div>
<div class="selbox" style="left:1211px;top:21px;width:18px;height:18px;border:none"></div>
<div class="selbox" style="left:1336px;top:21px;width:18px;height:18px;border:none"></div>
<svg class="ic" style="left:1180px;top:19px" width="20" height="20" viewBox="0 0 24 24"><rect x="3" y="3" width="18" height="18" fill="#e8a0a8" stroke="#7a7a8a" stroke-width="1.6"/><path d="M7,12 C7,8 11,6.5 14,8 L14,6 L18,9.5 L14,12.5 L14,10.5 C12,10 10,10.5 9.5,12z M17,12.5 C17,16.5 13,18 10,16.5 L10,18.5 L6,15 L10,12 L10,14 C12,14.5 14,14 14.5,12.5z" fill="#f4d0d4" stroke="#d04858" stroke-width=".7"/></svg><svg class="ic" style="left:1210px;top:19px" width="20" height="20" viewBox="0 0 24 24"><path d="M9,2 L10.5,6 L14.5,4 L13,8 L17,9.5 L13,11 L9,9.5 L5,11.5 L6.5,7.5 L3,5.5 L7.5,5.5z" fill="#e048c8" stroke="#a02890" stroke-width=".5"/><path d="M9,8 L20,17.5 L15.5,17.5 L17.5,22 L15,22.5 L13.5,18.5 L10,21z" fill="#f4f4e8" stroke="#8a7a3a" stroke-width=".9"/></svg><svg class="ic" style="left:1241px;top:19px" width="20" height="20" viewBox="0 0 24 24"><path d="M5,10 L12,5 L20,4.5 L21,8 L15,9.5 L12,11 L8,11z" fill="#e8b068" stroke="#a86a20" stroke-width=".6"/><path d="M5,11.5 L12,8 L19,11.5 V21 H5z" fill="#d8e4f8" stroke="#5a78b0" stroke-width=".8"/><path d="M8,14 v5 M5.5,16.5 h5 M14,14 v5 M11.5,16.5 h5" stroke="#2a6ae0" stroke-width="1.1"/></svg><svg class="ic" style="left:1273px;top:19px" width="20" height="20" viewBox="0 0 24 24"><ellipse cx="12" cy="21" rx="6" ry="1.5" fill="#888" opacity=".5"/><path d="M7,8 C7,3 17,3 17,8.5 C17,12 13.2,12 13.2,15.5 H10.6 C10.6,11 14,11 14,8.5 C14,6 10,6 10,8.5z" fill="#4a78d0" stroke="#2a4a9a" stroke-width=".6"/><circle cx="11.9" cy="18.8" r="1.7" fill="#4a78d0" stroke="#2a4a9a" stroke-width=".6"/></svg><svg class="ic" style="left:1304px;top:19px" width="20" height="20" viewBox="0 0 24 24"><path d="M8,3.5 L12,2 L17,3.5 V9 L13,11 L8,9z" fill="#5a94e8" stroke="#1c4aa8" stroke-width=".7"/><path d="M8,3.5 L13,5.2 V11 M13,5.2 L17,3.5" fill="none" stroke="#c8dcf8" stroke-width=".6"/><path d="M12,11.5 L16.5,9.5 L22,11.5 V18 L17.5,20.5 L12,18z" fill="#7aa8b8" stroke="#111" stroke-width=".9"/><path d="M12,11.5 L17.5,13.5 V20.5 M17.5,13.5 L22,11.5" fill="none" stroke="#111" stroke-width=".8"/><path d="M2,15.5 H10 M6.5,12 L10,15.5 L6.5,19 M3,11.5 L7,14 M3,19.5 L7,17" stroke="#e81818" stroke-width="1.7" fill="none"/></svg><svg class="ic" style="left:1336px;top:19px" width="20" height="20" viewBox="0 0 24 24"><path d="M3,7 L12,4 L21,7 L12,10.5z" fill="#f020e8" stroke="#c010b8" stroke-width=".6"/><path d="M3.5,8 V17 L12,21.5 L20.5,17 V8 L12,11z" fill="#a8c4b0" stroke="#2a64d0" stroke-width="1.4"/><path d="M12,11 V21.5" stroke="#2a64d0" stroke-width="1.6"/></svg><svg class="ic" style="left:1366px;top:19px" width="20" height="20" viewBox="0 0 24 24"><rect x="6" y="2.5" width="12" height="19.5" rx="1" fill="#eef0f0" stroke="#5a6a5a" stroke-width="1.3"/><rect x="6.8" y="8" width="10.4" height="3.6" fill="#f0a848"/><path d="M6.8,6h10.4M6.8,14.5h10.4M6.8,18h10.4" stroke="#8a8a8a" stroke-width="1"/></svg><svg class="ic" style="left:1397px;top:19px" width="20" height="20" viewBox="0 0 24 24"><path d="M12.5,4.2 A8.3,8.3 0 1 1 4.2,12.5" fill="none" stroke="#1e9a1e" stroke-width="2.4" transform="rotate(-8 12.5 12.5)"/><path d="M13.5,1 L8,4.5 L13.5,8.2z" fill="#1e9a1e"/><path d="M12.5,9.5v6M9.5,12.5h6" stroke="#1c2a8a" stroke-width="1.6"/></svg><svg class="ic" style="left:1428px;top:19px" width="20" height="20" viewBox="0 0 24 24"><rect x="3" y="3" width="18" height="18" fill="#e4e6f0" stroke="#4a4a6a" stroke-width="1.7"/><path d="M12,3V21M3,12H21" stroke="#2a2a4a" stroke-width="1.7"/></svg>
<div class="t" style="left:1463px;top:22px;letter-spacing:-.1px">LS: 1.00 PS: 1.00</div>
<div class="vs" style="left:1580px;top:24px;height:14px"></div>
<div class="t" style="left:1589px;top:22px">单位: 毫米</div>
<div class="vs" style="left:1654px;top:24px;height:14px"></div>
<div class="t" style="left:1663px;top:22px;letter-spacing:.42px">X = 0300.827 Y = 0379.463 Z = 0000.000</div>
</div>
<div id="taskbar"><div class="tb1"></div><div class="tb2"></div><div class="tb3"></div><div class="tb4"></div><div class="clock">10:02</div></div>
</body></html>
